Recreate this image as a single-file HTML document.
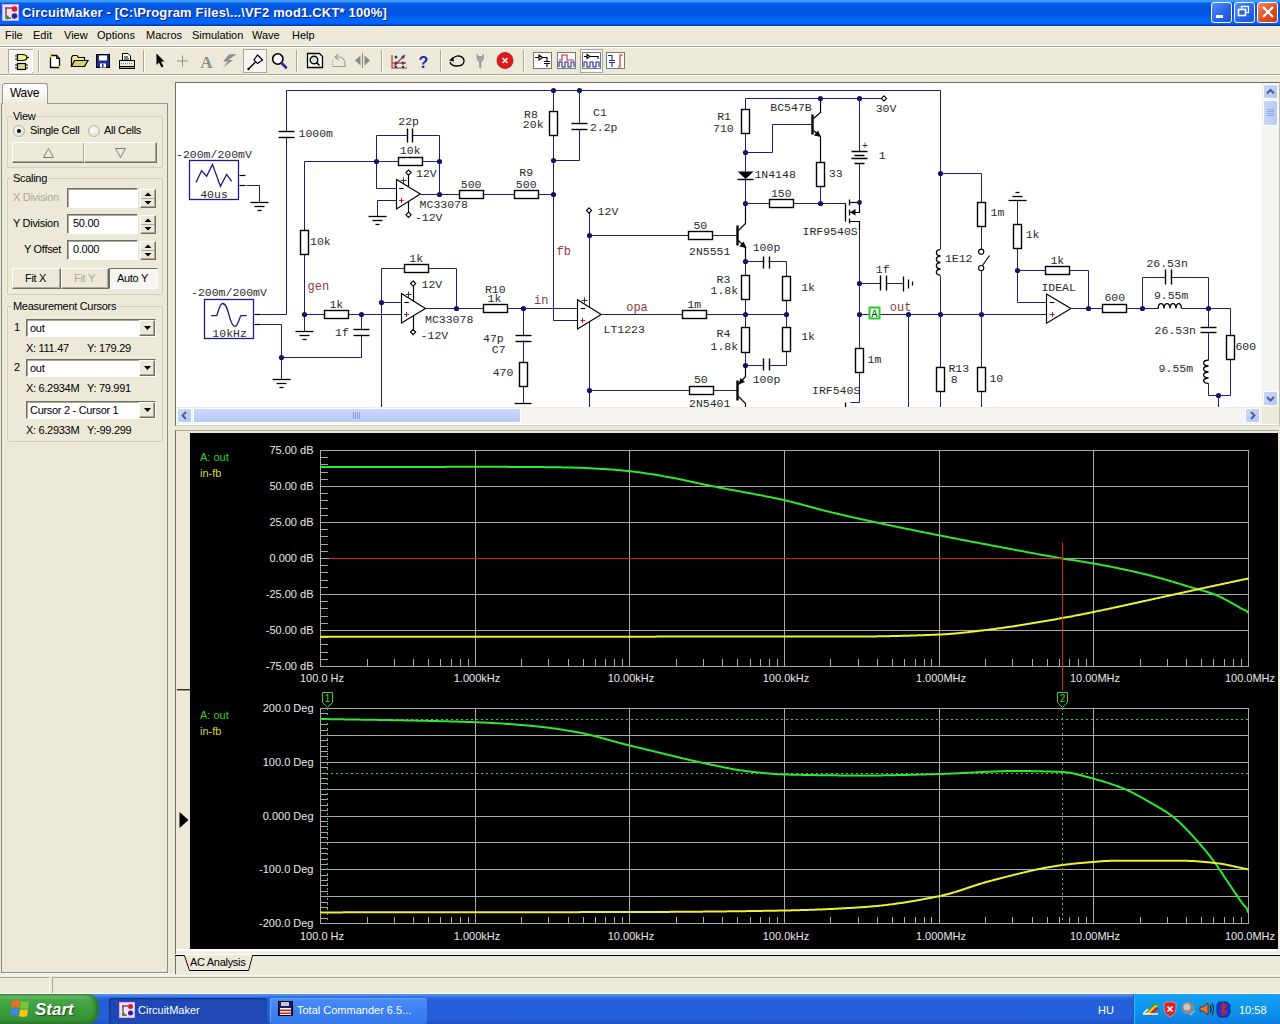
<!DOCTYPE html>
<html><head><meta charset="utf-8">
<style>
*{margin:0;padding:0;box-sizing:border-box}
html,body{width:1280px;height:1024px;overflow:hidden;background:#ECE9D8;font-family:"Liberation Sans",sans-serif;font-size:11px;color:#000}
.a{position:absolute}
#title{left:0;top:0;width:1280px;height:26px;background:linear-gradient(#3C9EFF 0px,#3A9AFF 1.5px,#0A5CE4 3.5px,#0055E1 8px,#0056E4 15px,#0062F2 17px,#0066FF 22px,#0060F8 24px,#0838B4 25px,#0834A8 26px)}
#title .t{left:22px;top:5px;color:#fff;font-weight:bold;font-size:13px;letter-spacing:0.17px;text-shadow:1px 1px 0 #0A1883;white-space:nowrap}
.wb{top:3px;width:21px;height:21px;border:1px solid #fff;border-radius:3px;background:linear-gradient(135deg,#5A8DF8,#2463E8 60%,#1E56D8)}
#menu{left:0;top:26px;width:1280px;height:20px;background:#ECE9D8}
#menu span{position:absolute;top:2px;font-size:11px}
.hl{height:1px;background:#ACA899}
.hw{height:1px;background:#fff}
.sep{width:2px;height:22px;border-left:1px solid #ACA899;border-right:1px solid #fff}
.panel{background:#ECE9D8}
.gb{border:1px solid #D0D0BF;border-radius:2px}
.gbt{background:#ECE9D8;padding:0 1px;font-size:11px}
.btn{background:#ECE9D8;border-top:1px solid #fff;border-left:1px solid #fff;border-right:1px solid #716F64;border-bottom:1px solid #716F64;box-shadow:inset -1px -1px 0 #ACA899}
.edit{background:#fff;border-top:1px solid #716F64;border-left:1px solid #716F64;border-bottom:1px solid #fff;border-right:1px solid #fff;box-shadow:inset 1px 1px 0 #ACA899}
.mono{font-family:"Liberation Mono",monospace}
</style></head><body>

<!-- TITLE BAR -->
<div id="title" class="a">
  <div class="t a">CircuitMaker - [C:\Program Files\...\VF2 mod1.CKT* 100%]</div>
</div>

<!-- MENU -->
<div class="a" style="left:0;top:26px;width:1280px;height:1px;background:#F2F2F6"></div>
<div id="menu" class="a" style="top:27px;height:19px">
  <span style="left:5px">File</span>
  <span style="left:33px">Edit</span>
  <span style="left:64px">View</span>
  <span style="left:97px">Options</span>
  <span style="left:146px">Macros</span>
  <span style="left:192px">Simulation</span>
  <span style="left:252px">Wave</span>
  <span style="left:292px">Help</span>
</div>
<div class="a hw" style="left:0;top:45px;width:1280px"></div>
<div class="a hl" style="left:0;top:46px;width:1280px;background:#A8A498"></div>
<div class="a hw" style="left:0;top:47px;width:1280px"></div>

<!-- TOOLBAR -->
<div id="toolbar" class="a" style="left:0;top:47px;width:1280px;height:28px"></div>
<svg class="a" style="left:0;top:0" width="660" height="80">
<!-- pressed buttons -->
<rect x="8.5" y="49.5" width="24" height="23" fill="#F6F5F1" stroke="#ACA899"/>
<line x1="9" y1="72.5" x2="32" y2="72.5" stroke="#fff"/><line x1="32.5" y1="50" x2="32.5" y2="72" stroke="#fff"/>
<rect x="243.5" y="49.5" width="23" height="23" fill="#F6F5F1" stroke="#ACA899"/>
<rect x="580.5" y="49.5" width="22" height="23" fill="#F6F5F1" stroke="#ACA899"/>
<!-- separators -->
<g stroke="#ACA899"><line x1="38.5" y1="50" x2="38.5" y2="72"/><line x1="143.5" y1="50" x2="143.5" y2="72"/><line x1="296.5" y1="50" x2="296.5" y2="72"/><line x1="381.5" y1="50" x2="381.5" y2="72"/><line x1="440.5" y1="50" x2="440.5" y2="72"/><line x1="523.5" y1="50" x2="523.5" y2="72"/></g>
<g stroke="#fff"><line x1="39.5" y1="50" x2="39.5" y2="72"/><line x1="144.5" y1="50" x2="144.5" y2="72"/><line x1="297.5" y1="50" x2="297.5" y2="72"/><line x1="382.5" y1="50" x2="382.5" y2="72"/><line x1="441.5" y1="50" x2="441.5" y2="72"/><line x1="524.5" y1="50" x2="524.5" y2="72"/></g>
<!-- icon1: gate + chip -->
<path d="M17.5,54.5 H22 Q27,54.5 27,57.5 Q27,60.5 22,60.5 H17.5 Z" fill="#F3F08A" stroke="#000" stroke-width="1.2"/>
<line x1="15" y1="56" x2="17.5" y2="56" stroke="#000"/><line x1="15" y1="59" x2="17.5" y2="59" stroke="#000"/><line x1="27" y1="57.5" x2="29" y2="57.5" stroke="#000"/>
<rect x="17.5" y="63.5" width="8" height="6" fill="#DCDA8E" stroke="#000" stroke-width="1.2"/>
<line x1="15" y1="65" x2="17.5" y2="65" stroke="#000"/><line x1="15" y1="68" x2="17.5" y2="68" stroke="#000"/><line x1="25.5" y1="65" x2="28" y2="65" stroke="#000"/><line x1="25.5" y1="68" x2="28" y2="68" stroke="#000"/>
<!-- new doc -->
<path d="M50.5,55.5 H56.5 L59.5,58.5 V67.5 H50.5 Z" fill="#fff" stroke="#000" stroke-width="1.3"/>
<path d="M56.5,55.5 V58.5 H59.5" fill="none" stroke="#000"/>
<circle cx="50" cy="56" r="1.5" fill="#F0F060"/><circle cx="60" cy="67" r="1.2" fill="#F0F060"/>
<!-- open folder -->
<path d="M71.5,57.5 L73,55.5 H77 L78.5,57.5 H84.5 V66.5 H71.5 Z" fill="#F3E98A" stroke="#000" stroke-width="1.2"/>
<path d="M71.5,66.5 L74.5,60.5 H88 L84.5,66.5 Z" fill="#D9D26C" stroke="#000" stroke-width="1.2"/>
<!-- save -->
<rect x="96.5" y="54.5" width="13" height="13" fill="#1A2C9C" stroke="#000" stroke-width="1"/>
<rect x="99" y="55.5" width="8" height="5" fill="#fff"/>
<rect x="100" y="63.5" width="6" height="4" fill="#fff"/><rect x="102" y="64" width="1.5" height="3" fill="#1A2C9C"/>
<!-- print -->
<path d="M122.5,53.5 H128 L130.5,56 V60.5 H122.5 Z" fill="#fff" stroke="#000"/>
<line x1="124" y1="57" x2="128" y2="57" stroke="#000"/><line x1="124" y1="59" x2="129" y2="59" stroke="#000"/>
<rect x="119.5" y="60.5" width="15" height="6" fill="#E8E8E0" stroke="#000"/>
<line x1="121" y1="63.5" x2="133" y2="63.5" stroke="#888" stroke-dasharray="1,1"/>
<rect x="119.5" y="66.5" width="15" height="2" fill="#A0A0A0" stroke="#000"/>
<!-- arrow -->
<path d="M156.5,53.5 L156.5,65 L159,62.5 L161.5,67.5 L163.5,66.5 L161,61.5 L164.5,61.5 Z" fill="#000"/>
<!-- plus -->
<path d="M182.5,55.5 V66.5 M177,61 H188" stroke="#8E8E8E" stroke-width="1"/>
<!-- A -->
<text x="206.5" y="68" text-anchor="middle" font-family="Liberation Serif" font-weight="bold" font-size="17" fill="#8A8A8A">A</text>
<!-- lightning -->
<path d="M236.5,54 L229,54.5 L223,61.5 L228,61.5 L222.5,68 L233,60 L228.5,60 Z" fill="#8E8E8E"/>
<!-- probe -->
<path d="M257.5,55 L262.5,60 L257.5,63.5 L254,60 Z" fill="#fff" stroke="#000" stroke-width="1.2"/>
<path d="M255.5,62 L249,68.5" stroke="#000" stroke-width="1.3"/><circle cx="248.5" cy="69" r="1.2" fill="#000"/>
<!-- magnifier -->
<circle cx="277.8" cy="59" r="5.2" fill="#fff" stroke="#000" stroke-width="1.6"/>
<path d="M281.5,63 L286,67.5" stroke="#2A2A9A" stroke-width="2.6" stroke-linecap="round"/>
<!-- zoom fit -->
<path d="M307.5,53.5 H319.5 L322.5,56.5 V67.5 H307.5 Z" fill="#fff" stroke="#000" stroke-width="1.3"/>
<circle cx="314" cy="60" r="3.8" fill="#CFE3E8" stroke="#000" stroke-width="1.4"/><path d="M316.5,62.5 L319.5,65.5" stroke="#000" stroke-width="1.6"/>
<!-- rotate gray -->
<path d="M332,66.5 H346 M334.5,57 H339 Q344,57 345,63 V66" fill="none" stroke="#9C9C9C" stroke-width="1.2"/>
<path d="M338.5,54 L335,57 L338.5,60" fill="none" stroke="#9C9C9C" stroke-width="1.3"/>
<path d="M332.5,60 V66" stroke="#9C9C9C" stroke-dasharray="1,1"/>
<!-- flip -->
<path d="M360.5,55.5 L355,60.5 L360.5,65.5 Z M364.5,55.5 L370,60.5 L364.5,65.5 Z" fill="#8A8A8A"/>
<line x1="362.5" y1="53" x2="362.5" y2="68" stroke="#8A8A8A"/>
<!-- net icon -->
<g stroke="#C03020" stroke-width="1.2" fill="none"><path d="M392,55 V68 H407"/><path d="M394,66 L405,55"/><path d="M392,63 H406"/></g>
<g fill="#2A3A8A"><circle cx="396" cy="57" r="1.5"/><circle cx="403" cy="57" r="1.5"/><circle cx="396" cy="63" r="1.5"/><circle cx="403" cy="63" r="1.5"/><circle cx="396" cy="67" r="1.3"/><circle cx="403" cy="67" r="1.3"/></g>
<!-- ? -->
<text x="423.5" y="67.5" text-anchor="middle" font-family="Liberation Sans" font-weight="bold" font-size="16" fill="#1A2AB0">?</text>
<!-- undo -->
<path d="M452.5,58.5 Q456,55.5 459,56 Q464,57 464,61 Q464,66 457,66 Q451,66 450,62" fill="none" stroke="#000" stroke-width="1.3"/>
<path d="M449,60.5 L453,57 L454,61.5 Z" fill="#000"/>
<!-- wrench -->
<path d="M477,54 V58 Q477,61 479.5,61.5 V67.5 Q480,69 481,67.5 V61.5 Q483.5,61 483.5,58 V54 L482,56.5 H478.5 Z" fill="#A6A6A6" stroke="#8A8A8A" stroke-width="0.6"/>
<!-- stop -->
<circle cx="505" cy="60.5" r="8" fill="#E01818" stroke="#A01010" stroke-width="0.8"/>
<path d="M502.5,58 L507.5,63 M507.5,58 L502.5,63" stroke="#fff" stroke-width="1.6"/>
<!-- 4 icons -->
<g stroke="#777" fill="#fff"><rect x="533.5" y="52.5" width="18" height="16"/><rect x="557.5" y="52.5" width="18" height="16"/><rect x="582.5" y="52.5" width="18" height="16"/><rect x="606.5" y="52.5" width="18" height="16"/></g>
<g fill="none" stroke="#000" stroke-width="1.1">
<path d="M535,57.5 H539 M539,55 L542.5,57.5 L539,60 Z M542.5,57.5 H547 V61 M544,61.5 H550 M544,63.5 H550 M547,64 V67"/>
<path d="M559,67 V62 H562 V67 H565 V62 H568 V67 H571 V62 H574 V67" stroke="#1A2A9A"/>
<path d="M559,60 H562 V55 H567 V60 H574" stroke="#D02020"/>
<path d="M584,56.5 H587 M587,54.5 L590,56.5 L587,58.5 Z M590,56.5 H598 V59" />
<path d="M584,67 V62 H587 V67 H590 V62 H593 V67 H596 V62 H599 V67" stroke="#1A2A9A"/>
<path d="M608,55.5 H612 V60 M609,60.5 H615 M609,62.5 H615 M612,63 V67" stroke="#1A2A9A"/>
<path d="M618,67 H620 V55 H623" stroke="#D02020"/>
</g>
</svg>

<div class="a hl" style="left:0;top:74px;width:1280px"></div>
<div class="a hw" style="left:0;top:75px;width:1280px"></div>

<!-- LEFT PANEL -->
<div style="letter-spacing:-0.3px">
<!-- left panel -->
<div class="a" style="left:0;top:81px;width:176px;height:893px;border-bottom:1px solid #fff"></div>
<div class="a" style="left:1px;top:103px;width:167px;height:870px;border:1px solid #8A8A80;border-top-color:#919B9C;background:#ECE9D8"></div>
<!-- Wave tab -->
<div class="a" style="left:2px;top:83px;width:46px;height:21px;border:1px solid #919B9C;border-bottom:none;border-radius:3px 3px 0 0;background:linear-gradient(#FFFFFF,#F6F5F0 60%,#ECE9D8)"></div>
<div class="a" style="left:3px;top:103px;width:44px;height:2px;background:#ECE9D8"></div>
<div class="a" style="left:10px;top:86px;font-size:12px">Wave</div>

<!-- View group -->
<div class="a gb" style="left:7px;top:116px;width:156px;height:52px"></div>
<div class="a gbt" style="left:12px;top:110px;font-size:11px">View</div>
<div class="a" style="left:13px;top:125px;width:12px;height:12px;border-radius:50%;border:1px solid #B4B4A8;background:radial-gradient(circle at 40% 40%,#fff,#D8D8CC)"></div>
<div class="a" style="left:17px;top:129px;width:4px;height:4px;border-radius:50%;background:#000"></div>
<div class="a" style="left:30px;top:124px">Single Cell</div>
<div class="a" style="left:88px;top:125px;width:12px;height:12px;border-radius:50%;border:1px solid #B4B4A8;background:radial-gradient(circle at 40% 40%,#fff,#D8D8CC)"></div>
<div class="a" style="left:104px;top:124px">All Cells</div>
<div class="a btn" style="left:12px;top:142px;width:73px;height:21px"></div>
<div class="a btn" style="left:84px;top:142px;width:73px;height:21px"></div>
<svg class="a" style="left:0;top:0" width="170" height="170"><path d="M43.5,157.5 L48.5,148.5 L53.5,157.5 Z M115.5,148.5 L125.5,148.5 L120.5,157.5 Z" fill="none" stroke="#7F7F7F" stroke-width="1"/></svg>

<!-- Scaling group -->
<div class="a gb" style="left:7px;top:178px;width:156px;height:117px"></div>
<div class="a gbt" style="left:12px;top:172px">Scaling</div>
<div class="a" style="left:13px;top:191px;color:#ACA899">X Division</div>
<div class="a edit" style="left:67px;top:188px;width:71px;height:20px;background:#fff"></div>
<div class="a" style="left:13px;top:217px">Y Division</div>
<div class="a edit" style="left:67px;top:214px;width:71px;height:20px"></div>
<div class="a" style="left:73px;top:217px">50.00</div>
<div class="a" style="left:24px;top:243px">Y Offset</div>
<div class="a edit" style="left:67px;top:240px;width:71px;height:20px"></div>
<div class="a" style="left:73px;top:243px">0.000</div>
<!-- spinners -->
<div class="a btn" style="left:140px;top:189px;width:16px;height:19px"></div>
<div class="a btn" style="left:140px;top:215px;width:16px;height:19px"></div>
<div class="a btn" style="left:140px;top:241px;width:16px;height:19px"></div>
<svg class="a" style="left:0;top:0" width="170" height="300">
<g fill="#000">
<path d="M144.5,196 L151.5,196 L148,192.5 Z M144.5,201 L151.5,201 L148,204.5 Z"/>
<path d="M144.5,222 L151.5,222 L148,218.5 Z M144.5,227 L151.5,227 L148,230.5 Z"/>
<path d="M144.5,248 L151.5,248 L148,244.5 Z M144.5,253 L151.5,253 L148,256.5 Z"/>
</g>
<line x1="141" y1="198.5" x2="155" y2="198.5" stroke="#ACA899"/>
<line x1="141" y1="224.5" x2="155" y2="224.5" stroke="#ACA899"/>
<line x1="141" y1="250.5" x2="155" y2="250.5" stroke="#ACA899"/>
</svg>
<div class="a btn" style="left:12px;top:268px;width:49px;height:21px"></div>
<div class="a" style="left:25px;top:272px">Fit X</div>
<div class="a btn" style="left:61px;top:268px;width:48px;height:21px"></div>
<div class="a" style="left:74px;top:272px;color:#ACA899">Fit Y</div>
<div class="a" style="left:109px;top:268px;width:49px;height:21px;background:#F6F5F0;border-top:1px solid #716F64;border-left:1px solid #716F64;border-right:1px solid #fff;border-bottom:1px solid #fff"></div>
<div class="a" style="left:117px;top:272px">Auto Y</div>

<!-- Measurement cursors -->
<div class="a gb" style="left:7px;top:306px;width:156px;height:136px"></div>
<div class="a gbt" style="left:12px;top:300px">Measurement Cursors</div>
<div class="a" style="left:14px;top:321px">1</div>
<div class="a edit" style="left:26px;top:319px;width:130px;height:18px"></div>
<div class="a" style="left:30px;top:322px">out</div>
<div class="a btn" style="left:139px;top:320px;width:16px;height:16px"></div>
<div class="a" style="left:26px;top:342px">X: 111.47</div><div class="a" style="left:87px;top:342px">Y: 179.29</div>
<div class="a" style="left:14px;top:361px">2</div>
<div class="a edit" style="left:26px;top:359px;width:130px;height:18px"></div>
<div class="a" style="left:30px;top:362px">out</div>
<div class="a btn" style="left:139px;top:360px;width:16px;height:16px"></div>
<div class="a" style="left:26px;top:382px">X: 6.2934M</div><div class="a" style="left:87px;top:382px">Y: 79.991</div>
<div class="a edit" style="left:26px;top:401px;width:130px;height:18px"></div>
<div class="a" style="left:30px;top:404px">Cursor 2 - Cursor 1</div>
<div class="a btn" style="left:139px;top:402px;width:16px;height:16px"></div>
<div class="a" style="left:26px;top:424px">X: 6.2933M</div><div class="a" style="left:87px;top:424px">Y:-99.299</div>
<svg class="a" style="left:0;top:0" width="170" height="450"><g fill="#000">
<path d="M144,326 L151,326 L147.5,330 Z"/>
<path d="M144,366 L151,366 L147.5,370 Z"/>
<path d="M144,408 L151,408 L147.5,412 Z"/>
</g></svg>

</div>

<!-- SCHEMATIC FRAME -->
<div class="a" style="left:175px;top:82px;width:1105px;height:344px;border-top:1px solid #716F64;border-left:1px solid #716F64;border-right:1px solid #C4C0B4;border-bottom:1px solid #D4D0C4;background:#fff"></div>
<div class="a" style="left:176px;top:83px;width:1086px;height:324px;overflow:hidden;background:#fff"><svg class="a" style="left:-176px;top:-83px" width="1280" height="430" viewBox="0 0 1280 430" font-family="Liberation Mono, monospace"><rect x="189.5" y="160.5" width="49" height="39" fill="#fff" stroke="#1E1E82" stroke-width="1.3"/><path d="M196,182.5 L201.6,170.6 L206.6,176.3 L212.5,164.4 L220.4,186.3 L226.6,174.4 L231.6,181.3" fill="none" stroke="#1E1E82" stroke-width="1.3"/><text x="214" y="198" fill="#2A2A2A" text-anchor="middle" font-size="11.5">40us</text><text x="176" y="157.6" fill="#2A2A2A" text-anchor="start" font-size="11.5">-200m/200mV</text><path d="M239.5,175.5 L245.5,175.5" fill="none" stroke="#000" stroke-width="1.2"/><path d="M239.5,185.5 L245.5,185.5" fill="none" stroke="#000" stroke-width="1.2"/><path d="M246.5,185.5 L259.5,185.5 L259.5,202.5" fill="none" stroke="#1E1E82" stroke-width="1"/><path d="M250.5,202.5 L268.5,202.5" fill="none" stroke="#000" stroke-width="1.3"/><path d="M254.5,206.5 L264.5,206.5" fill="none" stroke="#000" stroke-width="1.3"/><path d="M257.5,210.5 L261.5,210.5" fill="none" stroke="#000" stroke-width="1.3"/><rect x="204.5" y="299.5" width="49" height="39" fill="#fff" stroke="#1E1E82" stroke-width="1.3"/><path d="M211,315.6 H216.8 C219,309 220,303.5 222.6,303.5 C226,303.5 227.5,309 229,315 C230.5,321 232,326.3 235,326.3 C238,326.3 239,318 241,315.6 H246.7" fill="none" stroke="#1E1E82" stroke-width="1.3"/><text x="229.6" y="336.8" fill="#2A2A2A" text-anchor="middle" font-size="11.5">10kHz</text><text x="191" y="296.4" fill="#2A2A2A" text-anchor="start" font-size="11.5">-200m/200mV</text><path d="M254.5,314.5 L260.5,314.5" fill="none" stroke="#000" stroke-width="1.2"/><path d="M254.5,324.5 L260.5,324.5" fill="none" stroke="#000" stroke-width="1.2"/><path d="M260.5,314.5 L286.5,314.5 L286.5,90.5 L940.5,90.5 L940.5,407.5" fill="none" stroke="#1E1E82" stroke-width="1"/><rect x="278.5" y="131.7" width="16" height="5.100000000000011" fill="#fff"/><path d="M278.5,131.5 L294.5,131.5" fill="none" stroke="#000" stroke-width="1.4"/><path d="M278.5,137.5 L294.5,137.5" fill="none" stroke="#000" stroke-width="1.4"/><text x="298.5" y="137" fill="#2A2A2A" text-anchor="start" font-size="11.5">1000m</text><path d="M260.5,324.5 L281.5,324.5 L281.5,379.5" fill="none" stroke="#1E1E82" stroke-width="1"/><circle cx="281.5" cy="357.5" r="2.6" fill="#141460"/><path d="M272.5,379.5 L290.5,379.5" fill="none" stroke="#000" stroke-width="1.3"/><path d="M276.5,383.5 L286.5,383.5" fill="none" stroke="#000" stroke-width="1.3"/><path d="M279.5,387.5 L283.5,387.5" fill="none" stroke="#000" stroke-width="1.3"/><path d="M281.5,357.5 L361.5,357.5 L361.5,314.5" fill="none" stroke="#1E1E82" stroke-width="1"/><rect x="353.8" y="330.20000000000005" width="16" height="4.599999999999954" fill="#fff"/><path d="M353.5,329.5 L369.5,329.5" fill="none" stroke="#000" stroke-width="1.4"/><path d="M353.5,335.5 L369.5,335.5" fill="none" stroke="#000" stroke-width="1.4"/><text x="335" y="335.6" fill="#2A2A2A" text-anchor="start" font-size="11.5">1f</text><path d="M304.5,230.5 L304.5,161.5 L376.5,161.5" fill="none" stroke="#1E1E82" stroke-width="1"/><path d="M304.5,254.5 L304.5,331.5" fill="none" stroke="#1E1E82" stroke-width="1"/><rect x="300.5" y="230.5" width="8.0" height="24.0" fill="#fff" stroke="#000" stroke-width="1.4"/><text x="310" y="244.9" fill="#2A2A2A" text-anchor="start" font-size="11.5">10k</text><text x="307.5" y="289.9" fill="#8E3A3A" text-anchor="start" font-size="12">gen</text><circle cx="304.5" cy="314.5" r="2.6" fill="#141460"/><path d="M295.5,331.5 L313.5,331.5" fill="none" stroke="#000" stroke-width="1.3"/><path d="M299.5,335.5 L309.5,335.5" fill="none" stroke="#000" stroke-width="1.3"/><path d="M302.5,339.5 L306.5,339.5" fill="none" stroke="#000" stroke-width="1.3"/><path d="M304.5,314.5 L361.5,314.5 L401.5,314.5" fill="none" stroke="#1E1E82" stroke-width="1"/><rect x="324.5" y="310.5" width="24.0" height="8.0" fill="#fff" stroke="#000" stroke-width="1.4"/><text x="336.3" y="307.8" fill="#2A2A2A" text-anchor="middle" font-size="11.5">1k</text><circle cx="361.5" cy="314.5" r="2.6" fill="#141460"/><path d="M376.5,135.5 L439.5,135.5 L439.5,194.5" fill="none" stroke="#1E1E82" stroke-width="1"/><path d="M376.5,135.5 L376.5,188.5 L396.5,188.5" fill="none" stroke="#1E1E82" stroke-width="1"/><rect x="408.0" y="128.5" width="4.000000000000045" height="14" fill="#fff"/><path d="M407.5,128.5 L407.5,142.5" fill="none" stroke="#000" stroke-width="1.4"/><path d="M412.5,128.5 L412.5,142.5" fill="none" stroke="#000" stroke-width="1.4"/><text x="408.6" y="125" fill="#2A2A2A" text-anchor="middle" font-size="11.5">22p</text><path d="M376.5,161.5 L439.5,161.5" fill="none" stroke="#1E1E82" stroke-width="1"/><rect x="398.5" y="157.5" width="24.0" height="8.0" fill="#fff" stroke="#000" stroke-width="1.4"/><text x="410.2" y="154.3" fill="#2A2A2A" text-anchor="middle" font-size="11.5">10k</text><circle cx="376.5" cy="161.5" r="2.6" fill="#141460"/><circle cx="439.5" cy="161.5" r="2.6" fill="#141460"/><path d="M377.5,200.5 L396.5,200.5" fill="none" stroke="#1E1E82" stroke-width="1"/><path d="M377.5,200.5 L377.5,216.5" fill="none" stroke="#1E1E82" stroke-width="1"/><path d="M368.5,216.5 L386.5,216.5" fill="none" stroke="#000" stroke-width="1.3"/><path d="M372.5,220.5 L382.5,220.5" fill="none" stroke="#000" stroke-width="1.3"/><path d="M375.5,224.5 L379.5,224.5" fill="none" stroke="#000" stroke-width="1.3"/><path d="M408.5,175.5 L408.5,186.5" fill="none" stroke="#000" stroke-width="1.2"/><path d="M408.5,201.5 L408.5,212.5" fill="none" stroke="#000" stroke-width="1.2"/><path d="M408.5,170.0 L411.1,172.6 L408.5,175.2 L405.9,172.6 Z" fill="#fff" stroke="#000" stroke-width="1.1"/><path d="M408.5,212.20000000000002 L411.1,214.8 L408.5,217.4 L405.9,214.8 Z" fill="#fff" stroke="#000" stroke-width="1.1"/><path d="M396.5,179.6 L420.3,194.1 L396.5,208.9 Z" fill="#fff" stroke="#000" stroke-width="1.15"/><text x="416" y="176.6" fill="#2A2A2A" text-anchor="start" font-size="11.5">12V</text><text x="419.6" y="208.2" fill="#2A2A2A" text-anchor="start" font-size="11.5">MC33078</text><text x="414.9" y="221.1" fill="#2A2A2A" text-anchor="start" font-size="11.5">-12V</text><path d="M399.2,188.5 H403.7" stroke="#000" stroke-width="1.1"/><path d="M399.0,200.5 H403.8 M401.5,198.1 V202.9" stroke="#C02020" stroke-width="1.1"/><path d="M400.6,180.5 H406.6 M403.5,177.5 V183.5" stroke="#333" stroke-width="1"/><path d="M420.5,194.5 L459.5,194.5" fill="none" stroke="#1E1E82" stroke-width="1"/><circle cx="439.5" cy="194.5" r="2.6" fill="#141460"/><rect x="459.5" y="190.5" width="24.0" height="8.0" fill="#fff" stroke="#000" stroke-width="1.4"/><text x="471.1" y="187.6" fill="#2A2A2A" text-anchor="middle" font-size="11.5">500</text><path d="M483.5,194.5 L514.5,194.5" fill="none" stroke="#1E1E82" stroke-width="1"/><rect x="514.5" y="190.5" width="24.0" height="8.0" fill="#fff" stroke="#000" stroke-width="1.4"/><text x="526.2" y="175.9" fill="#2A2A2A" text-anchor="middle" font-size="11.5">R9</text><text x="526.2" y="187.6" fill="#2A2A2A" text-anchor="middle" font-size="11.5">500</text><path d="M538.5,194.5 L553.5,194.5" fill="none" stroke="#1E1E82" stroke-width="1"/><path d="M553.5,90.5 L553.5,320.5 L577.5,320.5" fill="none" stroke="#1E1E82" stroke-width="1"/><rect x="549.5" y="111.5" width="8.0" height="24.0" fill="#fff" stroke="#000" stroke-width="1.4"/><text x="530.9" y="117.5" fill="#2A2A2A" text-anchor="middle" font-size="11.5">R8</text><text x="533.2" y="127.8" fill="#2A2A2A" text-anchor="middle" font-size="11.5">20k</text><path d="M579.5,90.5 L579.5,160.5 L553.5,160.5" fill="none" stroke="#1E1E82" stroke-width="1"/><rect x="571.4" y="124.39999999999999" width="16" height="4.900000000000008" fill="#fff"/><path d="M571.5,123.5 L587.5,123.5" fill="none" stroke="#000" stroke-width="1.4"/><path d="M571.5,129.5 L587.5,129.5" fill="none" stroke="#000" stroke-width="1.4"/><text x="600" y="115.6" fill="#2A2A2A" text-anchor="middle" font-size="11.5">C1</text><text x="589.9" y="130.9" fill="#2A2A2A" text-anchor="start" font-size="11.5">2.2p</text><circle cx="553.5" cy="90.5" r="2.6" fill="#141460"/><circle cx="579.5" cy="90.5" r="2.6" fill="#141460"/><circle cx="553.5" cy="160.5" r="2.6" fill="#141460"/><circle cx="553.5" cy="194.5" r="2.6" fill="#141460"/><text x="556.6" y="255.2" fill="#8E3A3A" text-anchor="start" font-size="12">fb</text><path d="M381.5,407.5 L381.5,268.5 L456.5,268.5 L456.5,308.5" fill="none" stroke="#1E1E82" stroke-width="1"/><rect x="404.5" y="264.5" width="24.0" height="8.0" fill="#fff" stroke="#000" stroke-width="1.4"/><text x="416.2" y="261.8" fill="#2A2A2A" text-anchor="middle" font-size="11.5">1k</text><circle cx="381.5" cy="302.5" r="2.6" fill="#141460"/><path d="M381.5,302.5 L401.5,302.5" fill="none" stroke="#1E1E82" stroke-width="1"/><path d="M413.5,286.5 L413.5,301.5" fill="none" stroke="#000" stroke-width="1.2"/><path d="M413.5,315.5 L413.5,329.5" fill="none" stroke="#000" stroke-width="1.2"/><path d="M413.1,281.0 L415.70000000000005,283.6 L413.1,286.20000000000005 L410.5,283.6 Z" fill="#fff" stroke="#000" stroke-width="1.1"/><path d="M413.1,329.4 L415.70000000000005,332 L413.1,334.6 L410.5,332 Z" fill="#fff" stroke="#000" stroke-width="1.1"/><path d="M401.5,293.6 L425.4,308.6 L401.5,323.1 Z" fill="#fff" stroke="#000" stroke-width="1.15"/><text x="421.5" y="287.6" fill="#2A2A2A" text-anchor="start" font-size="11.5">12V</text><text x="425" y="322.8" fill="#2A2A2A" text-anchor="start" font-size="11.5">MC33078</text><text x="420.6" y="338.6" fill="#2A2A2A" text-anchor="start" font-size="11.5">-12V</text><path d="M404.3,302.5 H408.8" stroke="#000" stroke-width="1.1"/><path d="M404.1,314.5 H408.90000000000003 M406.5,312.1 V316.9" stroke="#C02020" stroke-width="1.1"/><path d="M405.7,294.5 H411.7 M408.5,291.5 V297.5" stroke="#333" stroke-width="1"/><path d="M425.5,308.5 L483.5,308.5" fill="none" stroke="#1E1E82" stroke-width="1"/><circle cx="456.5" cy="308.5" r="2.6" fill="#141460"/><rect x="483.5" y="304.5" width="24.0" height="8.0" fill="#fff" stroke="#000" stroke-width="1.4"/><text x="495.3" y="292.9" fill="#2A2A2A" text-anchor="middle" font-size="11.5">R10</text><text x="494.4" y="301.7" fill="#2A2A2A" text-anchor="middle" font-size="11.5">1k</text><path d="M507.5,308.5 L577.5,308.5" fill="none" stroke="#1E1E82" stroke-width="1"/><circle cx="523.5" cy="308.5" r="2.6" fill="#141460"/><text x="534" y="304.3" fill="#8E3A3A" text-anchor="start" font-size="12">in</text><path d="M523.5,308.5 L523.5,403.5" fill="none" stroke="#1E1E82" stroke-width="1"/><rect x="515.4" y="336.0" width="16" height="4.400000000000023" fill="#fff"/><path d="M515.5,335.5 L531.5,335.5" fill="none" stroke="#000" stroke-width="1.4"/><path d="M515.5,341.5 L531.5,341.5" fill="none" stroke="#000" stroke-width="1.4"/><text x="483" y="342" fill="#2A2A2A" text-anchor="start" font-size="11.5">47p</text><text x="491.8" y="352.6" fill="#2A2A2A" text-anchor="start" font-size="11.5">C7</text><rect x="519.5" y="362.5" width="8.0" height="24.0" fill="#fff" stroke="#000" stroke-width="1.4"/><text x="492.7" y="376.4" fill="#2A2A2A" text-anchor="start" font-size="11.5">470</text><path d="M514.5,403.5 L531.5,403.5" fill="none" stroke="#000" stroke-width="1.3"/><path d="M589.5,210.5 L589.5,407.5" fill="none" stroke="#1E1E82" stroke-width="1"/><path d="M577.5,299.8 L601.2,314.5 L577.5,329 Z" fill="#fff" stroke="#000" stroke-width="1.15"/><path d="M580.7,308.5 H585.2" stroke="#000" stroke-width="1.1"/><path d="M580.5,320.5 H585.3000000000001 M582.5,318.1 V322.9" stroke="#C02020" stroke-width="1.1"/><path d="M581.5,300.5 H587.5 M584.5,297.5 V303.5" stroke="#333" stroke-width="1"/><text x="603.5" y="332.5" fill="#2A2A2A" text-anchor="start" font-size="11.5">LT1223</text><path d="M601.5,314.5 L682.5,314.5" fill="none" stroke="#1E1E82" stroke-width="1"/><text x="626.2" y="310.8" fill="#8E3A3A" text-anchor="start" font-size="12">opa</text><rect x="682.5" y="310.5" width="24.0" height="8.0" fill="#fff" stroke="#000" stroke-width="1.4"/><text x="694.2" y="307.7" fill="#2A2A2A" text-anchor="middle" font-size="11.5">1m</text><path d="M706.5,314.5 L786.5,314.5" fill="none" stroke="#1E1E82" stroke-width="1"/><path d="M589,207.9 L591.6,210.5 L589,213.1 L586.4,210.5 Z" fill="#fff" stroke="#000" stroke-width="1.1"/><text x="597.6" y="214.5" fill="#2A2A2A" text-anchor="start" font-size="11.5">12V</text><path d="M589.5,235.5 L688.5,235.5" fill="none" stroke="#1E1E82" stroke-width="1"/><circle cx="589.5" cy="235.5" r="2.6" fill="#141460"/><rect x="688.5" y="231.5" width="24.0" height="8.0" fill="#fff" stroke="#000" stroke-width="1.4"/><text x="700.3" y="228.8" fill="#2A2A2A" text-anchor="middle" font-size="11.5">50</text><path d="M712.5,235.5 L737.5,235.5" fill="none" stroke="#1E1E82" stroke-width="1"/><text x="689" y="255.2" fill="#2A2A2A" text-anchor="start" font-size="11.5">2N5551</text><path d="M589.5,390.5 L689.5,390.5" fill="none" stroke="#1E1E82" stroke-width="1"/><circle cx="589.5" cy="390.5" r="2.6" fill="#141460"/><rect x="689.5" y="386.5" width="24.0" height="8.0" fill="#fff" stroke="#000" stroke-width="1.4"/><text x="700.8" y="383.4" fill="#2A2A2A" text-anchor="middle" font-size="11.5">50</text><path d="M713.5,390.5 L737.5,390.5" fill="none" stroke="#1E1E82" stroke-width="1"/><text x="689" y="406.9" fill="#2A2A2A" text-anchor="start" font-size="11.5">2N5401</text><path d="M737.5,225.5 L737.5,245.5" fill="none" stroke="#000" stroke-width="2.4"/><path d="M738.5,230.5 L745.5,223.5 L745.5,203.5" fill="none" stroke="#000" stroke-width="1.2"/><path d="M738.5,240.5 L745.5,247.5 L745.5,261.5" fill="none" stroke="#000" stroke-width="1.2"/><path d="M746.5,248 L739.5,246.5 L743.5,241.5 Z" fill="#000"/><path d="M737.5,380.5 L737.5,400.5" fill="none" stroke="#000" stroke-width="2.4"/><path d="M738.5,384.5 L745.5,376.5 L745.5,365.5" fill="none" stroke="#000" stroke-width="1.2"/><path d="M738.5,396.5 L745.5,403.5 L745.5,407.5" fill="none" stroke="#000" stroke-width="1.2"/><path d="M738.5,384.5 L740.5,378 L745,382 Z" fill="#000"/><path d="M745.5,109.5 L745.5,98.5 L882.5,98.5" fill="none" stroke="#1E1E82" stroke-width="1"/><path d="M884,95.80000000000001 L886.6,98.4 L884,101.0 L881.4,98.4 Z" fill="#fff" stroke="#000" stroke-width="1.1"/><text x="875.7" y="111.6" fill="#2A2A2A" text-anchor="start" font-size="11.5">30V</text><circle cx="820.5" cy="98.5" r="2.6" fill="#141460"/><circle cx="859.5" cy="98.5" r="2.6" fill="#141460"/><rect x="741.5" y="109.5" width="8.0" height="24.0" fill="#fff" stroke="#000" stroke-width="1.4"/><text x="724.1" y="119.6" fill="#2A2A2A" text-anchor="middle" font-size="11.5">R1</text><text x="723.4" y="131.6" fill="#2A2A2A" text-anchor="middle" font-size="11.5">710</text><path d="M745.5,133.5 L745.5,171.5" fill="none" stroke="#1E1E82" stroke-width="1"/><circle cx="745.5" cy="152.5" r="2.6" fill="#141460"/><path d="M745.5,152.5 L772.5,152.5 L772.5,124.5 L812.5,124.5" fill="none" stroke="#1E1E82" stroke-width="1"/><path d="M737.6,171.4 L753.6,171.4 L745.6,178.9 Z" fill="#000"/><path d="M737.5,179.5 L753.5,179.5" fill="none" stroke="#000" stroke-width="1.4"/><text x="754.4" y="177.7" fill="#2A2A2A" text-anchor="start" font-size="11.5">1N4148</text><path d="M745.5,179.5 L745.5,203.5" fill="none" stroke="#1E1E82" stroke-width="1"/><circle cx="745.5" cy="203.5" r="2.6" fill="#141460"/><path d="M745.5,203.5 L769.5,203.5" fill="none" stroke="#1E1E82" stroke-width="1"/><rect x="769.5" y="199.5" width="24.0" height="8.0" fill="#fff" stroke="#000" stroke-width="1.4"/><text x="781.3" y="197" fill="#2A2A2A" text-anchor="middle" font-size="11.5">150</text><path d="M793.5,203.5 L845.5,203.5 L845.5,221.5" fill="none" stroke="#1E1E82" stroke-width="1"/><circle cx="820.5" cy="203.5" r="2.6" fill="#141460"/><path d="M812.5,114.5 L812.5,134.5" fill="none" stroke="#000" stroke-width="2.4"/><path d="M813.5,118.5 L820.5,112.5 L820.5,98.5" fill="none" stroke="#000" stroke-width="1.2"/><path d="M813.5,130.5 L820.5,136.5 L820.5,162.5" fill="none" stroke="#000" stroke-width="1.2"/><path d="M821,137 L814,135.5 L818,130.5 Z" fill="#000"/><text x="770.3" y="111" fill="#2A2A2A" text-anchor="start" font-size="11.5">BC547B</text><rect x="816.5" y="162.5" width="8.0" height="24.0" fill="#fff" stroke="#000" stroke-width="1.4"/><text x="828.8" y="176.8" fill="#2A2A2A" text-anchor="start" font-size="11.5">33</text><path d="M820.5,186.5 L820.5,203.5" fill="none" stroke="#1E1E82" stroke-width="1"/><path d="M859.5,98.5 L859.5,151.5" fill="none" stroke="#1E1E82" stroke-width="1"/><path d="M859.5,163.5 L859.5,202.5" fill="none" stroke="#1E1E82" stroke-width="1"/><path d="M851.5,151.5 L867.5,151.5" fill="none" stroke="#000" stroke-width="1.5"/><path d="M854.5,155.5 L864.5,155.5" fill="none" stroke="#000" stroke-width="1.5"/><path d="M851.5,158.5 L867.5,158.5" fill="none" stroke="#000" stroke-width="1.5"/><path d="M854.5,163.5 L864.5,163.5" fill="none" stroke="#000" stroke-width="1.5"/><text x="862" y="149" fill="#2A2A2A" text-anchor="start" font-size="10">+</text><text x="882.3" y="158.5" fill="#2A2A2A" text-anchor="middle" font-size="11.5">1</text><path d="M845.5,203.5 L845.5,221.5" fill="none" stroke="#000" stroke-width="1.3"/><path d="M849.5,199.5 L849.5,205.5" fill="none" stroke="#000" stroke-width="1.3"/><path d="M849.5,209.5 L849.5,215.5" fill="none" stroke="#000" stroke-width="1.3"/><path d="M849.5,218.5 L849.5,223.5" fill="none" stroke="#000" stroke-width="1.3"/><path d="M849.5,202.5 L859.5,202.5" fill="none" stroke="#000" stroke-width="1.2"/><path d="M849.5,212.5 L859.5,212.5 L859.5,202.5" fill="none" stroke="#000" stroke-width="1.2"/><path d="M849.5,221.5 L859.5,221.5 L859.5,230.5" fill="none" stroke="#000" stroke-width="1.2"/><path d="M850,212.3 L855.5,209 L855.5,215.6 Z" fill="#000"/><circle cx="859.5" cy="202.5" r="2.4" fill="#141460"/><text x="802.5" y="234.7" fill="#2A2A2A" text-anchor="start" font-size="11.5">IRF9540S</text><path d="M859.5,230.5 L859.5,348.5" fill="none" stroke="#1E1E82" stroke-width="1"/><path d="M745.5,261.5 L745.5,275.5" fill="none" stroke="#1E1E82" stroke-width="1"/><circle cx="745.5" cy="261.5" r="2.6" fill="#141460"/><path d="M745.5,261.5 L786.5,261.5 L786.5,276.5" fill="none" stroke="#1E1E82" stroke-width="1"/><rect x="764.3000000000001" y="256.2" width="4.199999999999977" height="12" fill="#fff"/><path d="M763.5,256.5 L763.5,268.5" fill="none" stroke="#000" stroke-width="1.4"/><path d="M769.5,256.5 L769.5,268.5" fill="none" stroke="#000" stroke-width="1.4"/><text x="752.7" y="251" fill="#2A2A2A" text-anchor="start" font-size="11.5">100p</text><rect x="741.5" y="275.5" width="8.0" height="24.0" fill="#fff" stroke="#000" stroke-width="1.4"/><text x="723.4" y="282.7" fill="#2A2A2A" text-anchor="middle" font-size="11.5">R3</text><text x="710.5" y="293.9" fill="#2A2A2A" text-anchor="start" font-size="11.5">1.8k</text><rect x="782.5" y="276.5" width="8.0" height="24.0" fill="#fff" stroke="#000" stroke-width="1.4"/><text x="801.2" y="290.9" fill="#2A2A2A" text-anchor="start" font-size="11.5">1k</text><path d="M745.5,299.5 L745.5,327.5" fill="none" stroke="#1E1E82" stroke-width="1"/><path d="M786.5,300.5 L786.5,327.5" fill="none" stroke="#1E1E82" stroke-width="1"/><circle cx="745.5" cy="314.5" r="2.6" fill="#141460"/><circle cx="786.5" cy="314.5" r="2.6" fill="#141460"/><rect x="741.5" y="327.5" width="8.0" height="25.0" fill="#fff" stroke="#000" stroke-width="1.4"/><text x="723.4" y="336.6" fill="#2A2A2A" text-anchor="middle" font-size="11.5">R4</text><text x="710.5" y="349.5" fill="#2A2A2A" text-anchor="start" font-size="11.5">1.8k</text><rect x="782.5" y="327.5" width="8.0" height="24.0" fill="#fff" stroke="#000" stroke-width="1.4"/><text x="801.2" y="340.1" fill="#2A2A2A" text-anchor="start" font-size="11.5">1k</text><path d="M745.5,352.5 L745.5,365.5 L786.5,365.5 L786.5,351.5" fill="none" stroke="#1E1E82" stroke-width="1"/><circle cx="745.5" cy="365.5" r="2.6" fill="#141460"/><rect x="764.3000000000001" y="358.7" width="4.199999999999977" height="12" fill="#fff"/><path d="M763.5,358.5 L763.5,370.5" fill="none" stroke="#000" stroke-width="1.4"/><path d="M769.5,358.5 L769.5,370.5" fill="none" stroke="#000" stroke-width="1.4"/><text x="752.7" y="382.7" fill="#2A2A2A" text-anchor="start" font-size="11.5">100p</text><path d="M859.5,283.5 L880.5,283.5" fill="none" stroke="#1E1E82" stroke-width="1"/><path d="M886.5,283.5 L903.5,283.5" fill="none" stroke="#1E1E82" stroke-width="1"/><circle cx="859.5" cy="283.5" r="2.6" fill="#141460"/><rect x="881.1" y="275.5" width="4.599999999999954" height="15.0" fill="#fff"/><path d="M880.5,275.5 L880.5,290.5" fill="none" stroke="#000" stroke-width="1.4"/><path d="M886.5,275.5 L886.5,290.5" fill="none" stroke="#000" stroke-width="1.4"/><path d="M903.5,276.5 L903.5,291.5" fill="none" stroke="#000" stroke-width="1.3"/><path d="M908.5,279.5 L908.5,288.5" fill="none" stroke="#000" stroke-width="1.3"/><path d="M912.5,281.5 L912.5,285.5" fill="none" stroke="#000" stroke-width="1.3"/><text x="875.8" y="272.6" fill="#2A2A2A" text-anchor="start" font-size="11.5">1f</text><path d="M859.5,314.5 L1046.5,314.5" fill="none" stroke="#1E1E82" stroke-width="1"/><circle cx="859.5" cy="314.5" r="2.6" fill="#141460"/><rect x="869.5" y="307.5" width="10" height="11" fill="#E8FFE8" stroke="#2ACB2A" stroke-width="2"/><text x="874.5" y="316.5" fill="#222" text-anchor="middle" font-size="10">A</text><text x="889.8" y="310.8" fill="#8E3A3A" text-anchor="start" font-size="12">out</text><circle cx="908.5" cy="314.5" r="2.6" fill="#141460"/><circle cx="940.5" cy="314.5" r="2.6" fill="#141460"/><circle cx="981.5" cy="314.5" r="2.6" fill="#141460"/><path d="M908.5,314.5 L908.5,407.5" fill="none" stroke="#1E1E82" stroke-width="1"/><rect x="855.5" y="348.5" width="8.0" height="24.0" fill="#fff" stroke="#000" stroke-width="1.4"/><text x="867.6" y="363.1" fill="#2A2A2A" text-anchor="start" font-size="11.5">1m</text><path d="M859.5,372.5 L859.5,402.5 L850.5,402.5" fill="none" stroke="#1E1E82" stroke-width="1"/><path d="M845.5,402.5 L845.5,408.5" fill="none" stroke="#000" stroke-width="1.3"/><text x="812" y="394" fill="#2A2A2A" text-anchor="start" font-size="11.5">IRF540S</text><rect x="935" y="249" width="11" height="27" fill="#fff"/><path d="M940.5,249.4 C935,250 935,255.6 940.5,256 C935,256.6 935,262 940.5,262.5 C935,263 935,268.6 940.5,269 C935,269.6 935,275 940.5,275.2" fill="none" stroke="#000" stroke-width="1.3"/><text x="944.9" y="262.3" fill="#2A2A2A" text-anchor="start" font-size="11.5">1E12</text><rect x="936.5" y="367.5" width="8.0" height="24.0" fill="#fff" stroke="#000" stroke-width="1.4"/><text x="948.4" y="372.4" fill="#2A2A2A" text-anchor="start" font-size="11.5">R13</text><text x="954.3" y="383.4" fill="#2A2A2A" text-anchor="middle" font-size="11.5">8</text><path d="M940.5,173.5 L981.5,173.5 L981.5,202.5" fill="none" stroke="#1E1E82" stroke-width="1"/><circle cx="940.5" cy="173.5" r="2.6" fill="#141460"/><rect x="977.5" y="202.5" width="8.0" height="24.0" fill="#fff" stroke="#000" stroke-width="1.4"/><text x="990.6" y="216.4" fill="#2A2A2A" text-anchor="start" font-size="11.5">1m</text><path d="M981.5,226.5 L981.5,249.5" fill="none" stroke="#1E1E82" stroke-width="1"/><path d="M981.5,270.5 L981.5,407.5" fill="none" stroke="#1E1E82" stroke-width="1"/><circle cx="981.2" cy="251.7" r="2.6" fill="#fff" stroke="#000" stroke-width="1.1"/><circle cx="981.2" cy="268.1" r="2.6" fill="#fff" stroke="#000" stroke-width="1.1"/><path d="M982.5,265.5 L989.5,255.5" fill="none" stroke="#000" stroke-width="1.2"/><rect x="977.5" y="367.5" width="8.0" height="24.0" fill="#fff" stroke="#000" stroke-width="1.4"/><text x="989.4" y="381.9" fill="#2A2A2A" text-anchor="start" font-size="11.5">10</text><path d="M1008.5,200.5 L1026.5,200.5" fill="none" stroke="#000" stroke-width="1.3"/><path d="M1012.5,196.5 L1022.5,196.5" fill="none" stroke="#000" stroke-width="1.3"/><path d="M1015.5,192.5 L1019.5,192.5" fill="none" stroke="#000" stroke-width="1.3"/><path d="M1017.5,200.5 L1017.5,224.5" fill="none" stroke="#1E1E82" stroke-width="1"/><rect x="1013.5" y="224.5" width="8.0" height="24.0" fill="#fff" stroke="#000" stroke-width="1.4"/><text x="1025.7" y="238.2" fill="#2A2A2A" text-anchor="start" font-size="11.5">1k</text><path d="M1017.5,248.5 L1017.5,302.5 L1046.5,302.5" fill="none" stroke="#1E1E82" stroke-width="1"/><circle cx="1017.5" cy="270.5" r="2.6" fill="#141460"/><path d="M1017.5,270.5 L1088.5,270.5 L1088.5,308.5" fill="none" stroke="#1E1E82" stroke-width="1"/><rect x="1045.5" y="266.5" width="24.0" height="8.0" fill="#fff" stroke="#000" stroke-width="1.4"/><text x="1057.3" y="263.9" fill="#2A2A2A" text-anchor="middle" font-size="11.5">1k</text><path d="M1046.5,293.9 L1070.9,308.4 L1046.5,323.2 Z" fill="#fff" stroke="#000" stroke-width="1.15"/><text x="1041.4" y="290.9" fill="#2A2A2A" text-anchor="start" font-size="11.5">IDEAL</text><path d="M1049.8,302.5 H1054.3" stroke="#000" stroke-width="1.1"/><path d="M1049.6,314.5 H1054.3999999999999 M1052.5,312.1 V316.9" stroke="#C02020" stroke-width="1.1"/><path d="M1070.5,308.5 L1102.5,308.5" fill="none" stroke="#1E1E82" stroke-width="1"/><circle cx="1088.5" cy="308.5" r="2.6" fill="#141460"/><rect x="1102.5" y="304.5" width="24.0" height="8.0" fill="#fff" stroke="#000" stroke-width="1.4"/><text x="1114.8" y="301.4" fill="#2A2A2A" text-anchor="middle" font-size="11.5">600</text><path d="M1126.5,308.5 L1158.5,308.5" fill="none" stroke="#1E1E82" stroke-width="1"/><circle cx="1142.5" cy="308.5" r="2.6" fill="#141460"/><path d="M1142.5,308.5 L1142.5,277.5 L1208.5,277.5 L1208.5,308.5" fill="none" stroke="#1E1E82" stroke-width="1"/><rect x="1165.6999999999998" y="269.5" width="4.700000000000091" height="15.0" fill="#fff"/><path d="M1165.5,269.5 L1165.5,284.5" fill="none" stroke="#000" stroke-width="1.4"/><path d="M1171.5,269.5 L1171.5,284.5" fill="none" stroke="#000" stroke-width="1.4"/><text x="1146.4" y="266.7" fill="#2A2A2A" text-anchor="start" font-size="11.5">26.53n</text><path d="M1158.1,308.4 C1158.5,302 1163.5,302 1164,308.4 C1164.5,302 1169.5,302 1170,308.4 C1170.5,302 1175.5,302 1176,308.4 C1176.5,302 1181,302 1181.5,308.4" fill="none" stroke="#000" stroke-width="1.3"/><text x="1153.9" y="299.1" fill="#2A2A2A" text-anchor="start" font-size="11.5">9.55m</text><path d="M1181.5,308.5 L1230.5,308.5 L1230.5,335.5" fill="none" stroke="#1E1E82" stroke-width="1"/><circle cx="1208.5" cy="308.5" r="2.6" fill="#141460"/><rect x="1226.5" y="335.5" width="8.0" height="24.0" fill="#fff" stroke="#000" stroke-width="1.4"/><text x="1235.4" y="349.5" fill="#2A2A2A" text-anchor="start" font-size="11.5">600</text><path d="M1230.5,359.5 L1230.5,395.5 L1208.5,395.5" fill="none" stroke="#1E1E82" stroke-width="1"/><circle cx="1218.5" cy="395.5" r="2.6" fill="#141460"/><path d="M1218.5,395.5 L1218.5,407.5" fill="none" stroke="#1E1E82" stroke-width="1"/><path d="M1208.5,308.5 L1208.5,327.5" fill="none" stroke="#1E1E82" stroke-width="1"/><path d="M1208.5,332.5 L1208.5,360.5" fill="none" stroke="#1E1E82" stroke-width="1"/><path d="M1208.5,383.5 L1208.5,395.5" fill="none" stroke="#1E1E82" stroke-width="1"/><rect x="1200.5" y="327.8" width="16" height="4.200000000000034" fill="#fff"/><path d="M1200.5,327.5 L1216.5,327.5" fill="none" stroke="#000" stroke-width="1.4"/><path d="M1200.5,332.5 L1216.5,332.5" fill="none" stroke="#000" stroke-width="1.4"/><text x="1154.6" y="333.5" fill="#2A2A2A" text-anchor="start" font-size="11.5">26.53n</text><path d="M1208.5,360 C1202,360.5 1202,365.5 1208.5,366 C1202,366.5 1202,371.5 1208.5,372 C1202,372.5 1202,377.5 1208.5,378 C1202,378.5 1202,383 1208.5,383.4" fill="none" stroke="#000" stroke-width="1.3"/><text x="1158.6" y="372.4" fill="#2A2A2A" text-anchor="start" font-size="11.5">9.55m</text></svg></div>
<!-- vertical scrollbar -->
<div class="a" style="left:1262px;top:83px;width:17px;height:324px;background:#F4F3EE;border-left:1px solid #EEEDE5"></div>
<div class="a" style="left:1263px;top:84px;width:15px;height:15px;border:1px solid #fff;border-radius:2px;background:linear-gradient(135deg,#C8D8FC,#B2C8F8)"></div>
<div class="a" style="left:1263px;top:100px;width:15px;height:26px;border:1px solid #fff;border-radius:2px;background:linear-gradient(90deg,#C6D6FC,#BACCF6)"></div>
<div class="a" style="left:1263px;top:391px;width:15px;height:15px;border:1px solid #fff;border-radius:2px;background:linear-gradient(135deg,#C8D8FC,#B2C8F8)"></div>
<!-- horizontal scrollbar -->
<div class="a" style="left:176px;top:407px;width:1086px;height:17px;background:#F4F3EE;border-top:1px solid #EEEDE5"></div>
<div class="a" style="left:177px;top:408px;width:15px;height:15px;border:1px solid #fff;border-radius:2px;background:linear-gradient(135deg,#C8D8FC,#B2C8F8)"></div>
<div class="a" style="left:193px;top:408px;width:328px;height:15px;border:1px solid #fff;border-radius:2px;background:linear-gradient(#C9D8FC,#B7CAF5)"></div>
<div class="a" style="left:1245px;top:408px;width:15px;height:15px;border:1px solid #fff;border-radius:2px;background:linear-gradient(135deg,#C8D8FC,#B2C8F8)"></div>
<div class="a" style="left:1262px;top:407px;width:17px;height:17px;background:#ECE9D8"></div>
<svg class="a" style="left:0;top:0" width="1280" height="430">
<g fill="none" stroke="#4D6185" stroke-width="2">
<path d="M1267,93.5 L1270.5,90 L1274,93.5"/>
<path d="M1267,397 L1270.5,400.5 L1274,397"/>
<path d="M186,412 L182.5,415.5 L186,419"/>
<path d="M1251,412 L1254.5,415.5 L1251,419"/>
</g>
<g stroke="#8DA3D8" stroke-width="1"><path d="M1267,109.5 H1274 M1267,111.5 H1274 M1267,113.5 H1274 M1267,115.5 H1274"/>
<path d="M353.5,412 V419 M355.5,412 V419 M357.5,412 V419 M359.5,412 V419"/></g>
</svg>


<!-- WAVE FRAME -->
<div class="a" style="left:175px;top:430px;width:1104px;height:544px;border-top:1px solid #A8A498;border-left:1px solid #716F64;"></div>
<div class="a" style="left:190px;top:433px;width:1088px;height:516px;background:#000;overflow:hidden"><div class="a" style="left:-190px;top:-433px;width:1280px;height:1024px"><svg class="a" style="left:0;top:0" width="1280" height="1024" viewBox="0 0 1280 1024" font-family="Liberation Sans, sans-serif"><line x1="320.0" y1="450.5" x2="1249.0" y2="450.5" stroke="#A8A8A8" stroke-width="1" /><text x="313.5" y="454.0" fill="#E8E8E8" text-anchor="end" font-size="11">75.00 dB</text><line x1="320.0" y1="486.5" x2="1249.0" y2="486.5" stroke="#A8A8A8" stroke-width="1" /><text x="313.5" y="490.0" fill="#E8E8E8" text-anchor="end" font-size="11">50.00 dB</text><line x1="320.0" y1="522.5" x2="1249.0" y2="522.5" stroke="#A8A8A8" stroke-width="1" /><text x="313.5" y="526.0" fill="#E8E8E8" text-anchor="end" font-size="11">25.00 dB</text><line x1="320.0" y1="558.5" x2="1249.0" y2="558.5" stroke="#A8A8A8" stroke-width="1" /><text x="313.5" y="562.0" fill="#E8E8E8" text-anchor="end" font-size="11">0.000 dB</text><line x1="320.0" y1="594.5" x2="1249.0" y2="594.5" stroke="#A8A8A8" stroke-width="1" /><text x="313.5" y="598.0" fill="#E8E8E8" text-anchor="end" font-size="11">-25.00 dB</text><line x1="320.0" y1="630.5" x2="1249.0" y2="630.5" stroke="#A8A8A8" stroke-width="1" /><text x="313.5" y="634.0" fill="#E8E8E8" text-anchor="end" font-size="11">-50.00 dB</text><line x1="320.0" y1="666.5" x2="1249.0" y2="666.5" stroke="#A8A8A8" stroke-width="1" /><text x="313.5" y="670.0" fill="#E8E8E8" text-anchor="end" font-size="11">-75.00 dB</text><line x1="320.5" y1="450.0" x2="320.5" y2="667.0" stroke="#A8A8A8" stroke-width="1" /><line x1="475.5" y1="450.0" x2="475.5" y2="667.0" stroke="#A8A8A8" stroke-width="1" /><line x1="629.5" y1="450.0" x2="629.5" y2="667.0" stroke="#A8A8A8" stroke-width="1" /><line x1="784.5" y1="450.0" x2="784.5" y2="667.0" stroke="#A8A8A8" stroke-width="1" /><line x1="939.5" y1="450.0" x2="939.5" y2="667.0" stroke="#A8A8A8" stroke-width="1" /><line x1="1093.5" y1="450.0" x2="1093.5" y2="667.0" stroke="#A8A8A8" stroke-width="1" /><line x1="1248.5" y1="450.0" x2="1248.5" y2="667.0" stroke="#A8A8A8" stroke-width="1" /><line x1="320.0" y1="450.5" x2="328.0" y2="450.5" stroke="#A8A8A8" stroke-width="1" /><line x1="320.0" y1="457.5" x2="328.0" y2="457.5" stroke="#A8A8A8" stroke-width="1" /><line x1="320.0" y1="464.5" x2="328.0" y2="464.5" stroke="#A8A8A8" stroke-width="1" /><line x1="320.0" y1="472.5" x2="328.0" y2="472.5" stroke="#A8A8A8" stroke-width="1" /><line x1="320.0" y1="479.5" x2="328.0" y2="479.5" stroke="#A8A8A8" stroke-width="1" /><line x1="320.0" y1="486.5" x2="328.0" y2="486.5" stroke="#A8A8A8" stroke-width="1" /><line x1="320.0" y1="493.5" x2="328.0" y2="493.5" stroke="#A8A8A8" stroke-width="1" /><line x1="320.0" y1="500.5" x2="328.0" y2="500.5" stroke="#A8A8A8" stroke-width="1" /><line x1="320.0" y1="508.5" x2="328.0" y2="508.5" stroke="#A8A8A8" stroke-width="1" /><line x1="320.0" y1="515.5" x2="328.0" y2="515.5" stroke="#A8A8A8" stroke-width="1" /><line x1="320.0" y1="522.5" x2="328.0" y2="522.5" stroke="#A8A8A8" stroke-width="1" /><line x1="320.0" y1="529.5" x2="328.0" y2="529.5" stroke="#A8A8A8" stroke-width="1" /><line x1="320.0" y1="536.5" x2="328.0" y2="536.5" stroke="#A8A8A8" stroke-width="1" /><line x1="320.0" y1="544.5" x2="328.0" y2="544.5" stroke="#A8A8A8" stroke-width="1" /><line x1="320.0" y1="551.5" x2="328.0" y2="551.5" stroke="#A8A8A8" stroke-width="1" /><line x1="320.0" y1="558.5" x2="328.0" y2="558.5" stroke="#A8A8A8" stroke-width="1" /><line x1="320.0" y1="565.5" x2="328.0" y2="565.5" stroke="#A8A8A8" stroke-width="1" /><line x1="320.0" y1="572.5" x2="328.0" y2="572.5" stroke="#A8A8A8" stroke-width="1" /><line x1="320.0" y1="580.5" x2="328.0" y2="580.5" stroke="#A8A8A8" stroke-width="1" /><line x1="320.0" y1="587.5" x2="328.0" y2="587.5" stroke="#A8A8A8" stroke-width="1" /><line x1="320.0" y1="594.5" x2="328.0" y2="594.5" stroke="#A8A8A8" stroke-width="1" /><line x1="320.0" y1="601.5" x2="328.0" y2="601.5" stroke="#A8A8A8" stroke-width="1" /><line x1="320.0" y1="608.5" x2="328.0" y2="608.5" stroke="#A8A8A8" stroke-width="1" /><line x1="320.0" y1="616.5" x2="328.0" y2="616.5" stroke="#A8A8A8" stroke-width="1" /><line x1="320.0" y1="623.5" x2="328.0" y2="623.5" stroke="#A8A8A8" stroke-width="1" /><line x1="320.0" y1="630.5" x2="328.0" y2="630.5" stroke="#A8A8A8" stroke-width="1" /><line x1="320.0" y1="637.5" x2="328.0" y2="637.5" stroke="#A8A8A8" stroke-width="1" /><line x1="320.0" y1="644.5" x2="328.0" y2="644.5" stroke="#A8A8A8" stroke-width="1" /><line x1="320.0" y1="652.5" x2="328.0" y2="652.5" stroke="#A8A8A8" stroke-width="1" /><line x1="320.0" y1="659.5" x2="328.0" y2="659.5" stroke="#A8A8A8" stroke-width="1" /><line x1="320.0" y1="666.5" x2="328.0" y2="666.5" stroke="#A8A8A8" stroke-width="1" /><line x1="367.5" y1="659.0" x2="367.5" y2="666.0" stroke="#A8A8A8" stroke-width="1" /><line x1="394.5" y1="659.0" x2="394.5" y2="666.0" stroke="#A8A8A8" stroke-width="1" /><line x1="413.5" y1="659.0" x2="413.5" y2="666.0" stroke="#A8A8A8" stroke-width="1" /><line x1="428.5" y1="659.0" x2="428.5" y2="666.0" stroke="#A8A8A8" stroke-width="1" /><line x1="440.5" y1="659.0" x2="440.5" y2="666.0" stroke="#A8A8A8" stroke-width="1" /><line x1="451.5" y1="659.0" x2="451.5" y2="666.0" stroke="#A8A8A8" stroke-width="1" /><line x1="460.5" y1="659.0" x2="460.5" y2="666.0" stroke="#A8A8A8" stroke-width="1" /><line x1="468.5" y1="659.0" x2="468.5" y2="666.0" stroke="#A8A8A8" stroke-width="1" /><line x1="521.5" y1="659.0" x2="521.5" y2="666.0" stroke="#A8A8A8" stroke-width="1" /><line x1="548.5" y1="659.0" x2="548.5" y2="666.0" stroke="#A8A8A8" stroke-width="1" /><line x1="568.5" y1="659.0" x2="568.5" y2="666.0" stroke="#A8A8A8" stroke-width="1" /><line x1="583.5" y1="659.0" x2="583.5" y2="666.0" stroke="#A8A8A8" stroke-width="1" /><line x1="595.5" y1="659.0" x2="595.5" y2="666.0" stroke="#A8A8A8" stroke-width="1" /><line x1="605.5" y1="659.0" x2="605.5" y2="666.0" stroke="#A8A8A8" stroke-width="1" /><line x1="614.5" y1="659.0" x2="614.5" y2="666.0" stroke="#A8A8A8" stroke-width="1" /><line x1="622.5" y1="659.0" x2="622.5" y2="666.0" stroke="#A8A8A8" stroke-width="1" /><line x1="676.5" y1="659.0" x2="676.5" y2="666.0" stroke="#A8A8A8" stroke-width="1" /><line x1="703.5" y1="659.0" x2="703.5" y2="666.0" stroke="#A8A8A8" stroke-width="1" /><line x1="722.5" y1="659.0" x2="722.5" y2="666.0" stroke="#A8A8A8" stroke-width="1" /><line x1="737.5" y1="659.0" x2="737.5" y2="666.0" stroke="#A8A8A8" stroke-width="1" /><line x1="750.5" y1="659.0" x2="750.5" y2="666.0" stroke="#A8A8A8" stroke-width="1" /><line x1="760.5" y1="659.0" x2="760.5" y2="666.0" stroke="#A8A8A8" stroke-width="1" /><line x1="769.5" y1="659.0" x2="769.5" y2="666.0" stroke="#A8A8A8" stroke-width="1" /><line x1="777.5" y1="659.0" x2="777.5" y2="666.0" stroke="#A8A8A8" stroke-width="1" /><line x1="830.5" y1="659.0" x2="830.5" y2="666.0" stroke="#A8A8A8" stroke-width="1" /><line x1="858.5" y1="659.0" x2="858.5" y2="666.0" stroke="#A8A8A8" stroke-width="1" /><line x1="877.5" y1="659.0" x2="877.5" y2="666.0" stroke="#A8A8A8" stroke-width="1" /><line x1="892.5" y1="659.0" x2="892.5" y2="666.0" stroke="#A8A8A8" stroke-width="1" /><line x1="904.5" y1="659.0" x2="904.5" y2="666.0" stroke="#A8A8A8" stroke-width="1" /><line x1="915.5" y1="659.0" x2="915.5" y2="666.0" stroke="#A8A8A8" stroke-width="1" /><line x1="924.5" y1="659.0" x2="924.5" y2="666.0" stroke="#A8A8A8" stroke-width="1" /><line x1="931.5" y1="659.0" x2="931.5" y2="666.0" stroke="#A8A8A8" stroke-width="1" /><line x1="985.5" y1="659.0" x2="985.5" y2="666.0" stroke="#A8A8A8" stroke-width="1" /><line x1="1012.5" y1="659.0" x2="1012.5" y2="666.0" stroke="#A8A8A8" stroke-width="1" /><line x1="1032.5" y1="659.0" x2="1032.5" y2="666.0" stroke="#A8A8A8" stroke-width="1" /><line x1="1047.5" y1="659.0" x2="1047.5" y2="666.0" stroke="#A8A8A8" stroke-width="1" /><line x1="1059.5" y1="659.0" x2="1059.5" y2="666.0" stroke="#A8A8A8" stroke-width="1" /><line x1="1069.5" y1="659.0" x2="1069.5" y2="666.0" stroke="#A8A8A8" stroke-width="1" /><line x1="1078.5" y1="659.0" x2="1078.5" y2="666.0" stroke="#A8A8A8" stroke-width="1" /><line x1="1086.5" y1="659.0" x2="1086.5" y2="666.0" stroke="#A8A8A8" stroke-width="1" /><line x1="1140.5" y1="659.0" x2="1140.5" y2="666.0" stroke="#A8A8A8" stroke-width="1" /><line x1="1167.5" y1="659.0" x2="1167.5" y2="666.0" stroke="#A8A8A8" stroke-width="1" /><line x1="1186.5" y1="659.0" x2="1186.5" y2="666.0" stroke="#A8A8A8" stroke-width="1" /><line x1="1201.5" y1="659.0" x2="1201.5" y2="666.0" stroke="#A8A8A8" stroke-width="1" /><line x1="1213.5" y1="659.0" x2="1213.5" y2="666.0" stroke="#A8A8A8" stroke-width="1" /><line x1="1224.5" y1="659.0" x2="1224.5" y2="666.0" stroke="#A8A8A8" stroke-width="1" /><line x1="1233.5" y1="659.0" x2="1233.5" y2="666.0" stroke="#A8A8A8" stroke-width="1" /><line x1="1241.5" y1="659.0" x2="1241.5" y2="666.0" stroke="#A8A8A8" stroke-width="1" /><text x="322.0" y="681.5" fill="#E8E8E8" text-anchor="middle" font-size="11">100.0 Hz</text><text x="477.0" y="681.5" fill="#E8E8E8" text-anchor="middle" font-size="11">1.000kHz</text><text x="631.0" y="681.5" fill="#E8E8E8" text-anchor="middle" font-size="11">10.00kHz</text><text x="786.0" y="681.5" fill="#E8E8E8" text-anchor="middle" font-size="11">100.0kHz</text><text x="941.0" y="681.5" fill="#E8E8E8" text-anchor="middle" font-size="11">1.000MHz</text><text x="1095.0" y="681.5" fill="#E8E8E8" text-anchor="middle" font-size="11">10.00MHz</text><text x="1250.0" y="681.5" fill="#E8E8E8" text-anchor="middle" font-size="11">100.0MHz</text><line x1="320.0" y1="708.5" x2="1249.0" y2="708.5" stroke="#A8A8A8" stroke-width="1" /><text x="313.5" y="712.0" fill="#E8E8E8" text-anchor="end" font-size="11">200.0 Deg</text><line x1="320.0" y1="735.5" x2="1249.0" y2="735.5" stroke="#A8A8A8" stroke-width="1" /><line x1="320.0" y1="762.5" x2="1249.0" y2="762.5" stroke="#A8A8A8" stroke-width="1" /><text x="313.5" y="766.0" fill="#E8E8E8" text-anchor="end" font-size="11">100.0 Deg</text><line x1="320.0" y1="789.5" x2="1249.0" y2="789.5" stroke="#A8A8A8" stroke-width="1" /><line x1="320.0" y1="816.5" x2="1249.0" y2="816.5" stroke="#A8A8A8" stroke-width="1" /><text x="313.5" y="820.0" fill="#E8E8E8" text-anchor="end" font-size="11">0.000 Deg</text><line x1="320.0" y1="842.5" x2="1249.0" y2="842.5" stroke="#A8A8A8" stroke-width="1" /><line x1="320.0" y1="869.5" x2="1249.0" y2="869.5" stroke="#A8A8A8" stroke-width="1" /><text x="313.5" y="873.0" fill="#E8E8E8" text-anchor="end" font-size="11">-100.0 Deg</text><line x1="320.0" y1="896.5" x2="1249.0" y2="896.5" stroke="#A8A8A8" stroke-width="1" /><line x1="320.0" y1="923.5" x2="1249.0" y2="923.5" stroke="#A8A8A8" stroke-width="1" /><text x="313.5" y="927.0" fill="#E8E8E8" text-anchor="end" font-size="11">-200.0 Deg</text><line x1="320.5" y1="708.0" x2="320.5" y2="924.0" stroke="#A8A8A8" stroke-width="1" /><line x1="475.5" y1="708.0" x2="475.5" y2="924.0" stroke="#A8A8A8" stroke-width="1" /><line x1="629.5" y1="708.0" x2="629.5" y2="924.0" stroke="#A8A8A8" stroke-width="1" /><line x1="784.5" y1="708.0" x2="784.5" y2="924.0" stroke="#A8A8A8" stroke-width="1" /><line x1="939.5" y1="708.0" x2="939.5" y2="924.0" stroke="#A8A8A8" stroke-width="1" /><line x1="1093.5" y1="708.0" x2="1093.5" y2="924.0" stroke="#A8A8A8" stroke-width="1" /><line x1="1248.5" y1="708.0" x2="1248.5" y2="924.0" stroke="#A8A8A8" stroke-width="1" /><line x1="320.0" y1="708.5" x2="328.0" y2="708.5" stroke="#A8A8A8" stroke-width="1" /><line x1="320.0" y1="713.5" x2="328.0" y2="713.5" stroke="#A8A8A8" stroke-width="1" /><line x1="320.0" y1="719.5" x2="328.0" y2="719.5" stroke="#A8A8A8" stroke-width="1" /><line x1="320.0" y1="724.5" x2="328.0" y2="724.5" stroke="#A8A8A8" stroke-width="1" /><line x1="320.0" y1="730.5" x2="328.0" y2="730.5" stroke="#A8A8A8" stroke-width="1" /><line x1="320.0" y1="735.5" x2="328.0" y2="735.5" stroke="#A8A8A8" stroke-width="1" /><line x1="320.0" y1="740.5" x2="328.0" y2="740.5" stroke="#A8A8A8" stroke-width="1" /><line x1="320.0" y1="746.5" x2="328.0" y2="746.5" stroke="#A8A8A8" stroke-width="1" /><line x1="320.0" y1="751.5" x2="328.0" y2="751.5" stroke="#A8A8A8" stroke-width="1" /><line x1="320.0" y1="756.5" x2="328.0" y2="756.5" stroke="#A8A8A8" stroke-width="1" /><line x1="320.0" y1="762.5" x2="328.0" y2="762.5" stroke="#A8A8A8" stroke-width="1" /><line x1="320.0" y1="767.5" x2="328.0" y2="767.5" stroke="#A8A8A8" stroke-width="1" /><line x1="320.0" y1="773.5" x2="328.0" y2="773.5" stroke="#A8A8A8" stroke-width="1" /><line x1="320.0" y1="778.5" x2="328.0" y2="778.5" stroke="#A8A8A8" stroke-width="1" /><line x1="320.0" y1="783.5" x2="328.0" y2="783.5" stroke="#A8A8A8" stroke-width="1" /><line x1="320.0" y1="789.5" x2="328.0" y2="789.5" stroke="#A8A8A8" stroke-width="1" /><line x1="320.0" y1="794.5" x2="328.0" y2="794.5" stroke="#A8A8A8" stroke-width="1" /><line x1="320.0" y1="799.5" x2="328.0" y2="799.5" stroke="#A8A8A8" stroke-width="1" /><line x1="320.0" y1="805.5" x2="328.0" y2="805.5" stroke="#A8A8A8" stroke-width="1" /><line x1="320.0" y1="810.5" x2="328.0" y2="810.5" stroke="#A8A8A8" stroke-width="1" /><line x1="320.0" y1="816.5" x2="328.0" y2="816.5" stroke="#A8A8A8" stroke-width="1" /><line x1="320.0" y1="821.5" x2="328.0" y2="821.5" stroke="#A8A8A8" stroke-width="1" /><line x1="320.0" y1="826.5" x2="328.0" y2="826.5" stroke="#A8A8A8" stroke-width="1" /><line x1="320.0" y1="832.5" x2="328.0" y2="832.5" stroke="#A8A8A8" stroke-width="1" /><line x1="320.0" y1="837.5" x2="328.0" y2="837.5" stroke="#A8A8A8" stroke-width="1" /><line x1="320.0" y1="842.5" x2="328.0" y2="842.5" stroke="#A8A8A8" stroke-width="1" /><line x1="320.0" y1="848.5" x2="328.0" y2="848.5" stroke="#A8A8A8" stroke-width="1" /><line x1="320.0" y1="853.5" x2="328.0" y2="853.5" stroke="#A8A8A8" stroke-width="1" /><line x1="320.0" y1="859.5" x2="328.0" y2="859.5" stroke="#A8A8A8" stroke-width="1" /><line x1="320.0" y1="864.5" x2="328.0" y2="864.5" stroke="#A8A8A8" stroke-width="1" /><line x1="320.0" y1="869.5" x2="328.0" y2="869.5" stroke="#A8A8A8" stroke-width="1" /><line x1="320.0" y1="875.5" x2="328.0" y2="875.5" stroke="#A8A8A8" stroke-width="1" /><line x1="320.0" y1="880.5" x2="328.0" y2="880.5" stroke="#A8A8A8" stroke-width="1" /><line x1="320.0" y1="885.5" x2="328.0" y2="885.5" stroke="#A8A8A8" stroke-width="1" /><line x1="320.0" y1="891.5" x2="328.0" y2="891.5" stroke="#A8A8A8" stroke-width="1" /><line x1="320.0" y1="896.5" x2="328.0" y2="896.5" stroke="#A8A8A8" stroke-width="1" /><line x1="320.0" y1="902.5" x2="328.0" y2="902.5" stroke="#A8A8A8" stroke-width="1" /><line x1="320.0" y1="907.5" x2="328.0" y2="907.5" stroke="#A8A8A8" stroke-width="1" /><line x1="320.0" y1="912.5" x2="328.0" y2="912.5" stroke="#A8A8A8" stroke-width="1" /><line x1="320.0" y1="918.5" x2="328.0" y2="918.5" stroke="#A8A8A8" stroke-width="1" /><line x1="320.0" y1="923.5" x2="328.0" y2="923.5" stroke="#A8A8A8" stroke-width="1" /><line x1="367.5" y1="917.0" x2="367.5" y2="923.0" stroke="#A8A8A8" stroke-width="1" /><line x1="394.5" y1="917.0" x2="394.5" y2="923.0" stroke="#A8A8A8" stroke-width="1" /><line x1="413.5" y1="917.0" x2="413.5" y2="923.0" stroke="#A8A8A8" stroke-width="1" /><line x1="428.5" y1="917.0" x2="428.5" y2="923.0" stroke="#A8A8A8" stroke-width="1" /><line x1="440.5" y1="917.0" x2="440.5" y2="923.0" stroke="#A8A8A8" stroke-width="1" /><line x1="451.5" y1="917.0" x2="451.5" y2="923.0" stroke="#A8A8A8" stroke-width="1" /><line x1="460.5" y1="917.0" x2="460.5" y2="923.0" stroke="#A8A8A8" stroke-width="1" /><line x1="468.5" y1="917.0" x2="468.5" y2="923.0" stroke="#A8A8A8" stroke-width="1" /><line x1="521.5" y1="917.0" x2="521.5" y2="923.0" stroke="#A8A8A8" stroke-width="1" /><line x1="548.5" y1="917.0" x2="548.5" y2="923.0" stroke="#A8A8A8" stroke-width="1" /><line x1="568.5" y1="917.0" x2="568.5" y2="923.0" stroke="#A8A8A8" stroke-width="1" /><line x1="583.5" y1="917.0" x2="583.5" y2="923.0" stroke="#A8A8A8" stroke-width="1" /><line x1="595.5" y1="917.0" x2="595.5" y2="923.0" stroke="#A8A8A8" stroke-width="1" /><line x1="605.5" y1="917.0" x2="605.5" y2="923.0" stroke="#A8A8A8" stroke-width="1" /><line x1="614.5" y1="917.0" x2="614.5" y2="923.0" stroke="#A8A8A8" stroke-width="1" /><line x1="622.5" y1="917.0" x2="622.5" y2="923.0" stroke="#A8A8A8" stroke-width="1" /><line x1="676.5" y1="917.0" x2="676.5" y2="923.0" stroke="#A8A8A8" stroke-width="1" /><line x1="703.5" y1="917.0" x2="703.5" y2="923.0" stroke="#A8A8A8" stroke-width="1" /><line x1="722.5" y1="917.0" x2="722.5" y2="923.0" stroke="#A8A8A8" stroke-width="1" /><line x1="737.5" y1="917.0" x2="737.5" y2="923.0" stroke="#A8A8A8" stroke-width="1" /><line x1="750.5" y1="917.0" x2="750.5" y2="923.0" stroke="#A8A8A8" stroke-width="1" /><line x1="760.5" y1="917.0" x2="760.5" y2="923.0" stroke="#A8A8A8" stroke-width="1" /><line x1="769.5" y1="917.0" x2="769.5" y2="923.0" stroke="#A8A8A8" stroke-width="1" /><line x1="777.5" y1="917.0" x2="777.5" y2="923.0" stroke="#A8A8A8" stroke-width="1" /><line x1="830.5" y1="917.0" x2="830.5" y2="923.0" stroke="#A8A8A8" stroke-width="1" /><line x1="858.5" y1="917.0" x2="858.5" y2="923.0" stroke="#A8A8A8" stroke-width="1" /><line x1="877.5" y1="917.0" x2="877.5" y2="923.0" stroke="#A8A8A8" stroke-width="1" /><line x1="892.5" y1="917.0" x2="892.5" y2="923.0" stroke="#A8A8A8" stroke-width="1" /><line x1="904.5" y1="917.0" x2="904.5" y2="923.0" stroke="#A8A8A8" stroke-width="1" /><line x1="915.5" y1="917.0" x2="915.5" y2="923.0" stroke="#A8A8A8" stroke-width="1" /><line x1="924.5" y1="917.0" x2="924.5" y2="923.0" stroke="#A8A8A8" stroke-width="1" /><line x1="931.5" y1="917.0" x2="931.5" y2="923.0" stroke="#A8A8A8" stroke-width="1" /><line x1="985.5" y1="917.0" x2="985.5" y2="923.0" stroke="#A8A8A8" stroke-width="1" /><line x1="1012.5" y1="917.0" x2="1012.5" y2="923.0" stroke="#A8A8A8" stroke-width="1" /><line x1="1032.5" y1="917.0" x2="1032.5" y2="923.0" stroke="#A8A8A8" stroke-width="1" /><line x1="1047.5" y1="917.0" x2="1047.5" y2="923.0" stroke="#A8A8A8" stroke-width="1" /><line x1="1059.5" y1="917.0" x2="1059.5" y2="923.0" stroke="#A8A8A8" stroke-width="1" /><line x1="1069.5" y1="917.0" x2="1069.5" y2="923.0" stroke="#A8A8A8" stroke-width="1" /><line x1="1078.5" y1="917.0" x2="1078.5" y2="923.0" stroke="#A8A8A8" stroke-width="1" /><line x1="1086.5" y1="917.0" x2="1086.5" y2="923.0" stroke="#A8A8A8" stroke-width="1" /><line x1="1140.5" y1="917.0" x2="1140.5" y2="923.0" stroke="#A8A8A8" stroke-width="1" /><line x1="1167.5" y1="917.0" x2="1167.5" y2="923.0" stroke="#A8A8A8" stroke-width="1" /><line x1="1186.5" y1="917.0" x2="1186.5" y2="923.0" stroke="#A8A8A8" stroke-width="1" /><line x1="1201.5" y1="917.0" x2="1201.5" y2="923.0" stroke="#A8A8A8" stroke-width="1" /><line x1="1213.5" y1="917.0" x2="1213.5" y2="923.0" stroke="#A8A8A8" stroke-width="1" /><line x1="1224.5" y1="917.0" x2="1224.5" y2="923.0" stroke="#A8A8A8" stroke-width="1" /><line x1="1233.5" y1="917.0" x2="1233.5" y2="923.0" stroke="#A8A8A8" stroke-width="1" /><line x1="1241.5" y1="917.0" x2="1241.5" y2="923.0" stroke="#A8A8A8" stroke-width="1" /><text x="322.0" y="940.0" fill="#E8E8E8" text-anchor="middle" font-size="11">100.0 Hz</text><text x="477.0" y="940.0" fill="#E8E8E8" text-anchor="middle" font-size="11">1.000kHz</text><text x="631.0" y="940.0" fill="#E8E8E8" text-anchor="middle" font-size="11">10.00kHz</text><text x="786.0" y="940.0" fill="#E8E8E8" text-anchor="middle" font-size="11">100.0kHz</text><text x="941.0" y="940.0" fill="#E8E8E8" text-anchor="middle" font-size="11">1.000MHz</text><text x="1095.0" y="940.0" fill="#E8E8E8" text-anchor="middle" font-size="11">10.00MHz</text><text x="1250.0" y="940.0" fill="#E8E8E8" text-anchor="middle" font-size="11">100.0MHz</text><path d="M321.0,467.00 L322.5,467.00 L324.0,467.00 L325.5,467.00 L327.0,467.00 L328.5,467.00 L330.0,467.00 L331.5,467.00 L333.0,467.00 L334.5,467.00 L336.0,467.00 L337.5,467.00 L339.0,467.00 L340.5,467.00 L342.0,467.00 L343.5,467.00 L345.0,467.00 L346.5,467.00 L348.0,467.00 L349.5,467.00 L351.0,467.00 L352.5,467.00 L354.0,467.00 L355.5,467.00 L357.0,467.00 L358.5,467.00 L360.0,467.00 L361.5,467.00 L363.0,467.00 L364.5,467.00 L366.0,467.00 L367.5,467.00 L369.0,467.00 L370.5,467.00 L372.0,467.00 L373.5,467.00 L375.0,467.00 L376.5,467.00 L378.0,467.00 L379.5,467.00 L381.0,467.00 L382.5,467.00 L384.0,467.00 L385.5,467.00 L387.0,467.00 L388.5,467.00 L390.0,467.00 L391.5,467.00 L393.0,467.00 L394.5,467.00 L396.0,467.00 L397.5,467.00 L399.0,467.00 L400.5,467.00 L402.0,467.00 L403.5,467.00 L405.0,467.00 L406.5,467.00 L408.0,466.99 L409.5,466.99 L411.0,466.99 L412.5,466.99 L414.0,466.98 L415.5,466.98 L417.0,466.98 L418.5,466.97 L420.0,466.97 L421.5,466.96 L423.0,466.96 L424.5,466.95 L426.0,466.95 L427.5,466.95 L429.0,466.94 L430.5,466.93 L432.0,466.93 L433.5,466.92 L435.0,466.92 L436.5,466.91 L438.0,466.91 L439.5,466.90 L441.0,466.90 L442.5,466.89 L444.0,466.89 L445.5,466.88 L447.0,466.87 L448.5,466.87 L450.0,466.86 L451.5,466.86 L453.0,466.85 L454.5,466.85 L456.0,466.84 L457.5,466.84 L459.0,466.83 L460.5,466.83 L462.0,466.83 L463.5,466.82 L465.0,466.82 L466.5,466.82 L468.0,466.81 L469.5,466.81 L471.0,466.81 L472.5,466.81 L474.0,466.80 L475.5,466.80 L477.0,466.80 L478.5,466.80 L480.0,466.80 L481.5,466.80 L483.0,466.80 L484.5,466.80 L486.0,466.81 L487.5,466.81 L489.0,466.81 L490.5,466.81 L492.0,466.82 L493.5,466.82 L495.0,466.83 L496.5,466.83 L498.0,466.84 L499.5,466.84 L501.0,466.85 L502.5,466.85 L504.0,466.86 L505.5,466.87 L507.0,466.87 L508.5,466.88 L510.0,466.89 L511.5,466.90 L513.0,466.91 L514.5,466.91 L516.0,466.92 L517.5,466.93 L519.0,466.94 L520.5,466.95 L522.0,466.96 L523.5,466.97 L525.0,466.98 L526.5,466.99 L528.0,467.00 L529.5,467.01 L531.0,467.02 L532.5,467.03 L534.0,467.04 L535.5,467.05 L537.0,467.06 L538.5,467.08 L540.0,467.09 L541.5,467.10 L543.0,467.12 L544.5,467.13 L546.0,467.15 L547.5,467.17 L549.0,467.19 L550.5,467.21 L552.0,467.23 L553.5,467.25 L555.0,467.27 L556.5,467.29 L558.0,467.31 L559.5,467.33 L561.0,467.36 L562.5,467.38 L564.0,467.41 L565.5,467.44 L567.0,467.47 L568.5,467.49 L570.0,467.52 L571.5,467.56 L573.0,467.59 L574.5,467.63 L576.0,467.67 L577.5,467.71 L579.0,467.76 L580.5,467.81 L582.0,467.87 L583.5,467.93 L585.0,468.00 L586.5,468.07 L588.0,468.14 L589.5,468.22 L591.0,468.30 L592.5,468.38 L594.0,468.46 L595.5,468.54 L597.0,468.63 L598.5,468.72 L600.0,468.80 L601.5,468.90 L603.0,468.99 L604.5,469.08 L606.0,469.18 L607.5,469.29 L609.0,469.39 L610.5,469.50 L612.0,469.62 L613.5,469.73 L615.0,469.85 L616.5,469.98 L618.0,470.11 L619.5,470.24 L621.0,470.37 L622.5,470.51 L624.0,470.65 L625.5,470.79 L627.0,470.94 L628.5,471.10 L630.0,471.26 L631.5,471.42 L633.0,471.59 L634.5,471.77 L636.0,471.95 L637.5,472.14 L639.0,472.34 L640.5,472.54 L642.0,472.75 L643.5,472.97 L645.0,473.19 L646.5,473.41 L648.0,473.64 L649.5,473.88 L651.0,474.12 L652.5,474.36 L654.0,474.60 L655.5,474.85 L657.0,475.10 L658.5,475.35 L660.0,475.61 L661.5,475.86 L663.0,476.12 L664.5,476.38 L666.0,476.64 L667.5,476.91 L669.0,477.18 L670.5,477.45 L672.0,477.73 L673.5,478.01 L675.0,478.30 L676.5,478.59 L678.0,478.89 L679.5,479.20 L681.0,479.51 L682.5,479.82 L684.0,480.14 L685.5,480.45 L687.0,480.78 L688.5,481.10 L690.0,481.42 L691.5,481.75 L693.0,482.08 L694.5,482.41 L696.0,482.74 L697.5,483.06 L699.0,483.39 L700.5,483.72 L702.0,484.04 L703.5,484.36 L705.0,484.69 L706.5,485.00 L708.0,485.32 L709.5,485.63 L711.0,485.94 L712.5,486.24 L714.0,486.54 L715.5,486.84 L717.0,487.14 L718.5,487.43 L720.0,487.72 L721.5,488.01 L723.0,488.30 L724.5,488.58 L726.0,488.86 L727.5,489.15 L729.0,489.43 L730.5,489.71 L732.0,489.98 L733.5,490.26 L735.0,490.54 L736.5,490.81 L738.0,491.09 L739.5,491.36 L741.0,491.64 L742.5,491.92 L744.0,492.19 L745.5,492.47 L747.0,492.74 L748.5,493.02 L750.0,493.30 L751.5,493.57 L753.0,493.85 L754.5,494.13 L756.0,494.42 L757.5,494.70 L759.0,494.98 L760.5,495.27 L762.0,495.56 L763.5,495.85 L765.0,496.14 L766.5,496.44 L768.0,496.74 L769.5,497.04 L771.0,497.34 L772.5,497.65 L774.0,497.96 L775.5,498.27 L777.0,498.58 L778.5,498.90 L780.0,499.23 L781.5,499.56 L783.0,499.89 L784.5,500.23 L786.0,500.57 L787.5,500.92 L789.0,501.28 L790.5,501.64 L792.0,502.01 L793.5,502.39 L795.0,502.77 L796.5,503.16 L798.0,503.55 L799.5,503.94 L801.0,504.34 L802.5,504.74 L804.0,505.14 L805.5,505.55 L807.0,505.95 L808.5,506.36 L810.0,506.77 L811.5,507.17 L813.0,507.58 L814.5,507.98 L816.0,508.39 L817.5,508.79 L819.0,509.19 L820.5,509.58 L822.0,509.98 L823.5,510.36 L825.0,510.75 L826.5,511.13 L828.0,511.50 L829.5,511.87 L831.0,512.23 L832.5,512.60 L834.0,512.95 L835.5,513.31 L837.0,513.66 L838.5,514.02 L840.0,514.37 L841.5,514.72 L843.0,515.06 L844.5,515.41 L846.0,515.75 L847.5,516.09 L849.0,516.44 L850.5,516.78 L852.0,517.11 L853.5,517.45 L855.0,517.79 L856.5,518.12 L858.0,518.45 L859.5,518.79 L861.0,519.12 L862.5,519.45 L864.0,519.78 L865.5,520.11 L867.0,520.43 L868.5,520.76 L870.0,521.09 L871.5,521.41 L873.0,521.74 L874.5,522.06 L876.0,522.38 L877.5,522.70 L879.0,523.03 L880.5,523.35 L882.0,523.67 L883.5,523.98 L885.0,524.30 L886.5,524.62 L888.0,524.93 L889.5,525.25 L891.0,525.56 L892.5,525.88 L894.0,526.19 L895.5,526.50 L897.0,526.81 L898.5,527.12 L900.0,527.43 L901.5,527.74 L903.0,528.05 L904.5,528.36 L906.0,528.67 L907.5,528.97 L909.0,529.28 L910.5,529.59 L912.0,529.89 L913.5,530.20 L915.0,530.50 L916.5,530.80 L918.0,531.11 L919.5,531.41 L921.0,531.71 L922.5,532.01 L924.0,532.31 L925.5,532.61 L927.0,532.91 L928.5,533.21 L930.0,533.51 L931.5,533.81 L933.0,534.11 L934.5,534.41 L936.0,534.71 L937.5,535.00 L939.0,535.30 L940.5,535.60 L942.0,535.89 L943.5,536.19 L945.0,536.49 L946.5,536.78 L948.0,537.07 L949.5,537.37 L951.0,537.66 L952.5,537.95 L954.0,538.25 L955.5,538.54 L957.0,538.83 L958.5,539.12 L960.0,539.41 L961.5,539.70 L963.0,539.98 L964.5,540.27 L966.0,540.56 L967.5,540.85 L969.0,541.14 L970.5,541.42 L972.0,541.71 L973.5,541.99 L975.0,542.28 L976.5,542.57 L978.0,542.85 L979.5,543.13 L981.0,543.42 L982.5,543.70 L984.0,543.99 L985.5,544.27 L987.0,544.55 L988.5,544.84 L990.0,545.12 L991.5,545.40 L993.0,545.68 L994.5,545.97 L996.0,546.25 L997.5,546.53 L999.0,546.81 L1000.5,547.09 L1002.0,547.38 L1003.5,547.66 L1005.0,547.94 L1006.5,548.22 L1008.0,548.51 L1009.5,548.79 L1011.0,549.07 L1012.5,549.36 L1014.0,549.64 L1015.5,549.92 L1017.0,550.21 L1018.5,550.49 L1020.0,550.77 L1021.5,551.06 L1023.0,551.34 L1024.5,551.62 L1026.0,551.90 L1027.5,552.18 L1029.0,552.46 L1030.5,552.74 L1032.0,553.02 L1033.5,553.30 L1035.0,553.58 L1036.5,553.86 L1038.0,554.13 L1039.5,554.41 L1041.0,554.68 L1042.5,554.96 L1044.0,555.23 L1045.5,555.50 L1047.0,555.77 L1048.5,556.04 L1050.0,556.31 L1051.5,556.58 L1053.0,556.84 L1054.5,557.11 L1056.0,557.37 L1057.5,557.63 L1059.0,557.89 L1060.5,558.15 L1062.0,558.41 L1063.5,558.66 L1065.0,558.91 L1066.5,559.16 L1068.0,559.40 L1069.5,559.64 L1071.0,559.88 L1072.5,560.11 L1074.0,560.35 L1075.5,560.58 L1077.0,560.81 L1078.5,561.05 L1080.0,561.28 L1081.5,561.52 L1083.0,561.75 L1084.5,561.99 L1086.0,562.24 L1087.5,562.48 L1089.0,562.73 L1090.5,562.99 L1092.0,563.25 L1093.5,563.51 L1095.0,563.78 L1096.5,564.05 L1098.0,564.32 L1099.5,564.60 L1101.0,564.88 L1102.5,565.16 L1104.0,565.44 L1105.5,565.73 L1107.0,566.01 L1108.5,566.31 L1110.0,566.60 L1111.5,566.89 L1113.0,567.19 L1114.5,567.49 L1116.0,567.80 L1117.5,568.10 L1119.0,568.41 L1120.5,568.72 L1122.0,569.04 L1123.5,569.35 L1125.0,569.67 L1126.5,569.99 L1128.0,570.32 L1129.5,570.64 L1131.0,570.97 L1132.5,571.30 L1134.0,571.64 L1135.5,571.98 L1137.0,572.32 L1138.5,572.66 L1140.0,573.01 L1141.5,573.36 L1143.0,573.72 L1144.5,574.08 L1146.0,574.45 L1147.5,574.83 L1149.0,575.21 L1150.5,575.59 L1152.0,575.98 L1153.5,576.38 L1155.0,576.77 L1156.5,577.17 L1158.0,577.58 L1159.5,577.99 L1161.0,578.40 L1162.5,578.81 L1164.0,579.23 L1165.5,579.65 L1167.0,580.08 L1168.5,580.51 L1170.0,580.94 L1171.5,581.38 L1173.0,581.83 L1174.5,582.28 L1176.0,582.73 L1177.5,583.19 L1179.0,583.64 L1180.5,584.10 L1182.0,584.56 L1183.5,585.02 L1185.0,585.48 L1186.5,585.93 L1188.0,586.39 L1189.5,586.84 L1191.0,587.28 L1192.5,587.71 L1194.0,588.14 L1195.5,588.56 L1197.0,588.98 L1198.5,589.39 L1200.0,589.81 L1201.5,590.23 L1203.0,590.65 L1204.5,591.08 L1206.0,591.52 L1207.5,591.98 L1209.0,592.45 L1210.5,592.95 L1212.0,593.46 L1213.5,594.01 L1215.0,594.59 L1216.5,595.20 L1218.0,595.85 L1219.5,596.54 L1221.0,597.26 L1222.5,598.01 L1224.0,598.79 L1225.5,599.58 L1227.0,600.38 L1228.5,601.20 L1230.0,602.02 L1231.5,602.85 L1233.0,603.69 L1234.5,604.54 L1236.0,605.40 L1237.5,606.28 L1239.0,607.16 L1240.5,608.03 L1242.0,608.87 L1243.5,609.64 L1245.0,610.31 L1246.5,610.85 L1248.0,612.50" fill="none" stroke="#2EE82E" stroke-width="2" stroke-linejoin="round" stroke-linecap="round"/><path d="M321.0,636.80 L322.5,636.80 L324.0,636.80 L325.5,636.80 L327.0,636.80 L328.5,636.80 L330.0,636.80 L331.5,636.79 L333.0,636.79 L334.5,636.79 L336.0,636.79 L337.5,636.79 L339.0,636.79 L340.5,636.79 L342.0,636.79 L343.5,636.79 L345.0,636.79 L346.5,636.79 L348.0,636.79 L349.5,636.79 L351.0,636.78 L352.5,636.78 L354.0,636.78 L355.5,636.78 L357.0,636.78 L358.5,636.78 L360.0,636.78 L361.5,636.78 L363.0,636.78 L364.5,636.78 L366.0,636.78 L367.5,636.78 L369.0,636.77 L370.5,636.77 L372.0,636.77 L373.5,636.77 L375.0,636.77 L376.5,636.77 L378.0,636.77 L379.5,636.77 L381.0,636.77 L382.5,636.77 L384.0,636.77 L385.5,636.77 L387.0,636.77 L388.5,636.76 L390.0,636.76 L391.5,636.76 L393.0,636.76 L394.5,636.76 L396.0,636.76 L397.5,636.76 L399.0,636.76 L400.5,636.76 L402.0,636.76 L403.5,636.76 L405.0,636.76 L406.5,636.76 L408.0,636.75 L409.5,636.75 L411.0,636.75 L412.5,636.75 L414.0,636.75 L415.5,636.75 L417.0,636.75 L418.5,636.75 L420.0,636.75 L421.5,636.75 L423.0,636.75 L424.5,636.75 L426.0,636.75 L427.5,636.74 L429.0,636.74 L430.5,636.74 L432.0,636.74 L433.5,636.74 L435.0,636.74 L436.5,636.74 L438.0,636.74 L439.5,636.74 L441.0,636.74 L442.5,636.74 L444.0,636.74 L445.5,636.74 L447.0,636.73 L448.5,636.73 L450.0,636.73 L451.5,636.73 L453.0,636.73 L454.5,636.73 L456.0,636.73 L457.5,636.73 L459.0,636.73 L460.5,636.73 L462.0,636.73 L463.5,636.73 L465.0,636.73 L466.5,636.72 L468.0,636.72 L469.5,636.72 L471.0,636.72 L472.5,636.72 L474.0,636.72 L475.5,636.72 L477.0,636.72 L478.5,636.72 L480.0,636.72 L481.5,636.72 L483.0,636.72 L484.5,636.72 L486.0,636.72 L487.5,636.71 L489.0,636.71 L490.5,636.71 L492.0,636.71 L493.5,636.71 L495.0,636.71 L496.5,636.71 L498.0,636.71 L499.5,636.71 L501.0,636.71 L502.5,636.71 L504.0,636.71 L505.5,636.70 L507.0,636.70 L508.5,636.70 L510.0,636.70 L511.5,636.70 L513.0,636.70 L514.5,636.70 L516.0,636.70 L517.5,636.70 L519.0,636.70 L520.5,636.70 L522.0,636.70 L523.5,636.70 L525.0,636.69 L526.5,636.69 L528.0,636.69 L529.5,636.69 L531.0,636.69 L532.5,636.69 L534.0,636.69 L535.5,636.69 L537.0,636.69 L538.5,636.69 L540.0,636.69 L541.5,636.69 L543.0,636.69 L544.5,636.68 L546.0,636.68 L547.5,636.68 L549.0,636.68 L550.5,636.68 L552.0,636.68 L553.5,636.68 L555.0,636.68 L556.5,636.68 L558.0,636.68 L559.5,636.68 L561.0,636.68 L562.5,636.68 L564.0,636.67 L565.5,636.67 L567.0,636.67 L568.5,636.67 L570.0,636.67 L571.5,636.67 L573.0,636.67 L574.5,636.67 L576.0,636.67 L577.5,636.67 L579.0,636.67 L580.5,636.67 L582.0,636.67 L583.5,636.66 L585.0,636.66 L586.5,636.66 L588.0,636.66 L589.5,636.66 L591.0,636.66 L592.5,636.66 L594.0,636.66 L595.5,636.66 L597.0,636.66 L598.5,636.66 L600.0,636.66 L601.5,636.65 L603.0,636.65 L604.5,636.65 L606.0,636.65 L607.5,636.65 L609.0,636.65 L610.5,636.65 L612.0,636.65 L613.5,636.65 L615.0,636.65 L616.5,636.65 L618.0,636.65 L619.5,636.65 L621.0,636.64 L622.5,636.64 L624.0,636.64 L625.5,636.64 L627.0,636.64 L628.5,636.64 L630.0,636.64 L631.5,636.64 L633.0,636.64 L634.5,636.64 L636.0,636.64 L637.5,636.64 L639.0,636.63 L640.5,636.63 L642.0,636.63 L643.5,636.63 L645.0,636.63 L646.5,636.63 L648.0,636.63 L649.5,636.63 L651.0,636.63 L652.5,636.63 L654.0,636.63 L655.5,636.63 L657.0,636.62 L658.5,636.62 L660.0,636.62 L661.5,636.62 L663.0,636.62 L664.5,636.62 L666.0,636.62 L667.5,636.62 L669.0,636.62 L670.5,636.62 L672.0,636.62 L673.5,636.62 L675.0,636.61 L676.5,636.61 L678.0,636.61 L679.5,636.61 L681.0,636.61 L682.5,636.61 L684.0,636.61 L685.5,636.61 L687.0,636.61 L688.5,636.61 L690.0,636.61 L691.5,636.60 L693.0,636.60 L694.5,636.60 L696.0,636.60 L697.5,636.60 L699.0,636.60 L700.5,636.60 L702.0,636.60 L703.5,636.60 L705.0,636.60 L706.5,636.60 L708.0,636.60 L709.5,636.59 L711.0,636.59 L712.5,636.59 L714.0,636.59 L715.5,636.59 L717.0,636.59 L718.5,636.59 L720.0,636.59 L721.5,636.59 L723.0,636.59 L724.5,636.59 L726.0,636.59 L727.5,636.59 L729.0,636.59 L730.5,636.59 L732.0,636.58 L733.5,636.58 L735.0,636.58 L736.5,636.58 L738.0,636.58 L739.5,636.58 L741.0,636.58 L742.5,636.58 L744.0,636.58 L745.5,636.58 L747.0,636.58 L748.5,636.58 L750.0,636.58 L751.5,636.58 L753.0,636.58 L754.5,636.58 L756.0,636.58 L757.5,636.57 L759.0,636.57 L760.5,636.57 L762.0,636.57 L763.5,636.57 L765.0,636.57 L766.5,636.57 L768.0,636.57 L769.5,636.57 L771.0,636.57 L772.5,636.57 L774.0,636.57 L775.5,636.57 L777.0,636.57 L778.5,636.57 L780.0,636.57 L781.5,636.56 L783.0,636.56 L784.5,636.56 L786.0,636.56 L787.5,636.56 L789.0,636.56 L790.5,636.56 L792.0,636.56 L793.5,636.56 L795.0,636.56 L796.5,636.56 L798.0,636.56 L799.5,636.56 L801.0,636.55 L802.5,636.55 L804.0,636.55 L805.5,636.55 L807.0,636.55 L808.5,636.55 L810.0,636.55 L811.5,636.55 L813.0,636.55 L814.5,636.55 L816.0,636.54 L817.5,636.54 L819.0,636.54 L820.5,636.54 L822.0,636.54 L823.5,636.54 L825.0,636.54 L826.5,636.54 L828.0,636.54 L829.5,636.53 L831.0,636.53 L832.5,636.53 L834.0,636.53 L835.5,636.53 L837.0,636.53 L838.5,636.53 L840.0,636.52 L841.5,636.52 L843.0,636.52 L844.5,636.52 L846.0,636.52 L847.5,636.52 L849.0,636.51 L850.5,636.51 L852.0,636.51 L853.5,636.51 L855.0,636.51 L856.5,636.50 L858.0,636.50 L859.5,636.50 L861.0,636.50 L862.5,636.49 L864.0,636.49 L865.5,636.48 L867.0,636.47 L868.5,636.46 L870.0,636.45 L871.5,636.43 L873.0,636.42 L874.5,636.40 L876.0,636.38 L877.5,636.36 L879.0,636.34 L880.5,636.32 L882.0,636.29 L883.5,636.27 L885.0,636.24 L886.5,636.21 L888.0,636.18 L889.5,636.15 L891.0,636.12 L892.5,636.09 L894.0,636.05 L895.5,636.02 L897.0,635.98 L898.5,635.94 L900.0,635.90 L901.5,635.86 L903.0,635.82 L904.5,635.78 L906.0,635.73 L907.5,635.69 L909.0,635.64 L910.5,635.60 L912.0,635.55 L913.5,635.50 L915.0,635.45 L916.5,635.40 L918.0,635.35 L919.5,635.29 L921.0,635.24 L922.5,635.19 L924.0,635.13 L925.5,635.08 L927.0,635.02 L928.5,634.96 L930.0,634.90 L931.5,634.85 L933.0,634.79 L934.5,634.72 L936.0,634.66 L937.5,634.60 L939.0,634.54 L940.5,634.47 L942.0,634.39 L943.5,634.31 L945.0,634.23 L946.5,634.14 L948.0,634.04 L949.5,633.93 L951.0,633.81 L952.5,633.69 L954.0,633.57 L955.5,633.44 L957.0,633.30 L958.5,633.16 L960.0,633.01 L961.5,632.86 L963.0,632.70 L964.5,632.54 L966.0,632.38 L967.5,632.21 L969.0,632.04 L970.5,631.87 L972.0,631.69 L973.5,631.51 L975.0,631.33 L976.5,631.15 L978.0,630.97 L979.5,630.79 L981.0,630.60 L982.5,630.42 L984.0,630.23 L985.5,630.05 L987.0,629.87 L988.5,629.68 L990.0,629.50 L991.5,629.31 L993.0,629.12 L994.5,628.93 L996.0,628.74 L997.5,628.54 L999.0,628.34 L1000.5,628.14 L1002.0,627.93 L1003.5,627.73 L1005.0,627.51 L1006.5,627.30 L1008.0,627.08 L1009.5,626.86 L1011.0,626.64 L1012.5,626.42 L1014.0,626.19 L1015.5,625.96 L1017.0,625.73 L1018.5,625.49 L1020.0,625.26 L1021.5,625.02 L1023.0,624.78 L1024.5,624.54 L1026.0,624.29 L1027.5,624.05 L1029.0,623.80 L1030.5,623.55 L1032.0,623.30 L1033.5,623.05 L1035.0,622.79 L1036.5,622.54 L1038.0,622.28 L1039.5,622.03 L1041.0,621.77 L1042.5,621.51 L1044.0,621.25 L1045.5,620.99 L1047.0,620.73 L1048.5,620.47 L1050.0,620.20 L1051.5,619.94 L1053.0,619.68 L1054.5,619.41 L1056.0,619.15 L1057.5,618.88 L1059.0,618.62 L1060.5,618.35 L1062.0,618.09 L1063.5,617.82 L1065.0,617.55 L1066.5,617.27 L1068.0,617.00 L1069.5,616.72 L1071.0,616.44 L1072.5,616.16 L1074.0,615.87 L1075.5,615.58 L1077.0,615.29 L1078.5,615.00 L1080.0,614.71 L1081.5,614.41 L1083.0,614.11 L1084.5,613.81 L1086.0,613.51 L1087.5,613.21 L1089.0,612.91 L1090.5,612.61 L1092.0,612.30 L1093.5,612.00 L1095.0,611.69 L1096.5,611.38 L1098.0,611.07 L1099.5,610.76 L1101.0,610.45 L1102.5,610.13 L1104.0,609.82 L1105.5,609.50 L1107.0,609.18 L1108.5,608.86 L1110.0,608.54 L1111.5,608.22 L1113.0,607.89 L1114.5,607.57 L1116.0,607.25 L1117.5,606.92 L1119.0,606.59 L1120.5,606.27 L1122.0,605.94 L1123.5,605.61 L1125.0,605.28 L1126.5,604.95 L1128.0,604.62 L1129.5,604.30 L1131.0,603.97 L1132.5,603.64 L1134.0,603.31 L1135.5,602.98 L1137.0,602.65 L1138.5,602.33 L1140.0,602.00 L1141.5,601.67 L1143.0,601.35 L1144.5,601.02 L1146.0,600.69 L1147.5,600.36 L1149.0,600.03 L1150.5,599.70 L1152.0,599.37 L1153.5,599.04 L1155.0,598.71 L1156.5,598.38 L1158.0,598.05 L1159.5,597.72 L1161.0,597.39 L1162.5,597.05 L1164.0,596.72 L1165.5,596.39 L1167.0,596.06 L1168.5,595.73 L1170.0,595.40 L1171.5,595.07 L1173.0,594.73 L1174.5,594.40 L1176.0,594.07 L1177.5,593.74 L1179.0,593.41 L1180.5,593.08 L1182.0,592.75 L1183.5,592.42 L1185.0,592.09 L1186.5,591.77 L1188.0,591.44 L1189.5,591.11 L1191.0,590.78 L1192.5,590.46 L1194.0,590.13 L1195.5,589.81 L1197.0,589.48 L1198.5,589.15 L1200.0,588.83 L1201.5,588.51 L1203.0,588.18 L1204.5,587.86 L1206.0,587.53 L1207.5,587.21 L1209.0,586.89 L1210.5,586.56 L1212.0,586.24 L1213.5,585.92 L1215.0,585.59 L1216.5,585.27 L1218.0,584.95 L1219.5,584.63 L1221.0,584.30 L1222.5,583.98 L1224.0,583.66 L1225.5,583.34 L1227.0,583.01 L1228.5,582.69 L1230.0,582.37 L1231.5,582.05 L1233.0,581.73 L1234.5,581.40 L1236.0,581.08 L1237.5,580.76 L1239.0,580.44 L1240.5,580.12 L1242.0,579.82 L1243.5,579.54 L1245.0,579.30 L1246.5,579.10 L1248.0,578.50" fill="none" stroke="#F0F030" stroke-width="2" stroke-linejoin="round" stroke-linecap="round"/><line x1="329.0" y1="558.5" x2="1062.0" y2="558.5" stroke="#D02020" stroke-width="1" /><line x1="1062.5" y1="542.0" x2="1062.5" y2="690.5" stroke="#D02020" stroke-width="1" /><path d="M321.0,719.00 L322.5,719.05 L324.0,719.06 L325.5,719.08 L327.0,719.10 L328.5,719.12 L330.0,719.14 L331.5,719.17 L333.0,719.19 L334.5,719.22 L336.0,719.24 L337.5,719.26 L339.0,719.29 L340.5,719.31 L342.0,719.33 L343.5,719.35 L345.0,719.38 L346.5,719.40 L348.0,719.42 L349.5,719.45 L351.0,719.47 L352.5,719.49 L354.0,719.52 L355.5,719.54 L357.0,719.56 L358.5,719.58 L360.0,719.61 L361.5,719.63 L363.0,719.65 L364.5,719.68 L366.0,719.70 L367.5,719.73 L369.0,719.75 L370.5,719.77 L372.0,719.80 L373.5,719.82 L375.0,719.85 L376.5,719.87 L378.0,719.90 L379.5,719.92 L381.0,719.95 L382.5,719.98 L384.0,720.00 L385.5,720.03 L387.0,720.06 L388.5,720.08 L390.0,720.11 L391.5,720.14 L393.0,720.17 L394.5,720.19 L396.0,720.22 L397.5,720.25 L399.0,720.28 L400.5,720.31 L402.0,720.34 L403.5,720.37 L405.0,720.40 L406.5,720.43 L408.0,720.46 L409.5,720.49 L411.0,720.52 L412.5,720.55 L414.0,720.58 L415.5,720.61 L417.0,720.64 L418.5,720.67 L420.0,720.70 L421.5,720.73 L423.0,720.76 L424.5,720.80 L426.0,720.83 L427.5,720.86 L429.0,720.89 L430.5,720.93 L432.0,720.96 L433.5,720.99 L435.0,721.03 L436.5,721.06 L438.0,721.10 L439.5,721.13 L441.0,721.17 L442.5,721.21 L444.0,721.24 L445.5,721.28 L447.0,721.32 L448.5,721.36 L450.0,721.40 L451.5,721.44 L453.0,721.48 L454.5,721.52 L456.0,721.57 L457.5,721.61 L459.0,721.65 L460.5,721.70 L462.0,721.75 L463.5,721.79 L465.0,721.84 L466.5,721.89 L468.0,721.94 L469.5,721.99 L471.0,722.04 L472.5,722.10 L474.0,722.15 L475.5,722.21 L477.0,722.27 L478.5,722.33 L480.0,722.39 L481.5,722.45 L483.0,722.52 L484.5,722.59 L486.0,722.66 L487.5,722.74 L489.0,722.81 L490.5,722.89 L492.0,722.97 L493.5,723.06 L495.0,723.14 L496.5,723.23 L498.0,723.32 L499.5,723.41 L501.0,723.51 L502.5,723.60 L504.0,723.70 L505.5,723.80 L507.0,723.91 L508.5,724.01 L510.0,724.12 L511.5,724.23 L513.0,724.34 L514.5,724.45 L516.0,724.56 L517.5,724.68 L519.0,724.80 L520.5,724.92 L522.0,725.04 L523.5,725.16 L525.0,725.29 L526.5,725.42 L528.0,725.55 L529.5,725.68 L531.0,725.81 L532.5,725.96 L534.0,726.10 L535.5,726.25 L537.0,726.40 L538.5,726.56 L540.0,726.73 L541.5,726.90 L543.0,727.07 L544.5,727.24 L546.0,727.43 L547.5,727.61 L549.0,727.80 L550.5,728.00 L552.0,728.20 L553.5,728.40 L555.0,728.61 L556.5,728.82 L558.0,729.03 L559.5,729.25 L561.0,729.47 L562.5,729.70 L564.0,729.93 L565.5,730.16 L567.0,730.40 L568.5,730.64 L570.0,730.89 L571.5,731.14 L573.0,731.40 L574.5,731.66 L576.0,731.93 L577.5,732.21 L579.0,732.51 L580.5,732.81 L582.0,733.13 L583.5,733.45 L585.0,733.78 L586.5,734.13 L588.0,734.48 L589.5,734.84 L591.0,735.21 L592.5,735.58 L594.0,735.97 L595.5,736.35 L597.0,736.75 L598.5,737.14 L600.0,737.54 L601.5,737.95 L603.0,738.36 L604.5,738.77 L606.0,739.18 L607.5,739.59 L609.0,740.01 L610.5,740.42 L612.0,740.84 L613.5,741.25 L615.0,741.66 L616.5,742.07 L618.0,742.48 L619.5,742.88 L621.0,743.29 L622.5,743.68 L624.0,744.07 L625.5,744.46 L627.0,744.84 L628.5,745.22 L630.0,745.59 L631.5,745.96 L633.0,746.32 L634.5,746.68 L636.0,747.04 L637.5,747.40 L639.0,747.76 L640.5,748.12 L642.0,748.48 L643.5,748.84 L645.0,749.20 L646.5,749.56 L648.0,749.92 L649.5,750.28 L651.0,750.64 L652.5,751.01 L654.0,751.37 L655.5,751.74 L657.0,752.10 L658.5,752.47 L660.0,752.83 L661.5,753.20 L663.0,753.56 L664.5,753.93 L666.0,754.29 L667.5,754.66 L669.0,755.02 L670.5,755.38 L672.0,755.75 L673.5,756.11 L675.0,756.47 L676.5,756.83 L678.0,757.19 L679.5,757.55 L681.0,757.91 L682.5,758.26 L684.0,758.62 L685.5,758.97 L687.0,759.32 L688.5,759.67 L690.0,760.02 L691.5,760.37 L693.0,760.71 L694.5,761.06 L696.0,761.40 L697.5,761.74 L699.0,762.07 L700.5,762.41 L702.0,762.74 L703.5,763.07 L705.0,763.39 L706.5,763.72 L708.0,764.04 L709.5,764.35 L711.0,764.67 L712.5,764.98 L714.0,765.29 L715.5,765.60 L717.0,765.91 L718.5,766.22 L720.0,766.53 L721.5,766.84 L723.0,767.15 L724.5,767.45 L726.0,767.76 L727.5,768.06 L729.0,768.35 L730.5,768.64 L732.0,768.92 L733.5,769.19 L735.0,769.45 L736.5,769.70 L738.0,769.94 L739.5,770.16 L741.0,770.38 L742.5,770.58 L744.0,770.78 L745.5,770.97 L747.0,771.16 L748.5,771.35 L750.0,771.53 L751.5,771.71 L753.0,771.89 L754.5,772.07 L756.0,772.24 L757.5,772.41 L759.0,772.58 L760.5,772.74 L762.0,772.90 L763.5,773.05 L765.0,773.20 L766.5,773.34 L768.0,773.48 L769.5,773.61 L771.0,773.73 L772.5,773.85 L774.0,773.96 L775.5,774.05 L777.0,774.15 L778.5,774.23 L780.0,774.30 L781.5,774.37 L783.0,774.42 L784.5,774.47 L786.0,774.52 L787.5,774.56 L789.0,774.59 L790.5,774.63 L792.0,774.66 L793.5,774.69 L795.0,774.72 L796.5,774.76 L798.0,774.79 L799.5,774.82 L801.0,774.85 L802.5,774.88 L804.0,774.90 L805.5,774.93 L807.0,774.96 L808.5,774.99 L810.0,775.01 L811.5,775.04 L813.0,775.06 L814.5,775.09 L816.0,775.11 L817.5,775.13 L819.0,775.16 L820.5,775.18 L822.0,775.20 L823.5,775.22 L825.0,775.24 L826.5,775.26 L828.0,775.27 L829.5,775.29 L831.0,775.31 L832.5,775.32 L834.0,775.34 L835.5,775.35 L837.0,775.37 L838.5,775.38 L840.0,775.39 L841.5,775.41 L843.0,775.42 L844.5,775.43 L846.0,775.44 L847.5,775.45 L849.0,775.46 L850.5,775.46 L852.0,775.47 L853.5,775.48 L855.0,775.48 L856.5,775.49 L858.0,775.49 L859.5,775.49 L861.0,775.50 L862.5,775.50 L864.0,775.50 L865.5,775.50 L867.0,775.49 L868.5,775.49 L870.0,775.49 L871.5,775.48 L873.0,775.47 L874.5,775.46 L876.0,775.45 L877.5,775.43 L879.0,775.42 L880.5,775.40 L882.0,775.38 L883.5,775.36 L885.0,775.34 L886.5,775.32 L888.0,775.29 L889.5,775.27 L891.0,775.24 L892.5,775.21 L894.0,775.18 L895.5,775.15 L897.0,775.12 L898.5,775.09 L900.0,775.06 L901.5,775.02 L903.0,774.99 L904.5,774.95 L906.0,774.91 L907.5,774.88 L909.0,774.84 L910.5,774.80 L912.0,774.76 L913.5,774.72 L915.0,774.68 L916.5,774.64 L918.0,774.60 L919.5,774.56 L921.0,774.52 L922.5,774.48 L924.0,774.44 L925.5,774.40 L927.0,774.36 L928.5,774.31 L930.0,774.27 L931.5,774.23 L933.0,774.19 L934.5,774.15 L936.0,774.11 L937.5,774.07 L939.0,774.02 L940.5,773.98 L942.0,773.94 L943.5,773.89 L945.0,773.84 L946.5,773.78 L948.0,773.73 L949.5,773.67 L951.0,773.61 L952.5,773.54 L954.0,773.47 L955.5,773.40 L957.0,773.33 L958.5,773.26 L960.0,773.18 L961.5,773.11 L963.0,773.03 L964.5,772.95 L966.0,772.87 L967.5,772.79 L969.0,772.71 L970.5,772.63 L972.0,772.55 L973.5,772.47 L975.0,772.39 L976.5,772.30 L978.0,772.23 L979.5,772.15 L981.0,772.07 L982.5,771.99 L984.0,771.92 L985.5,771.84 L987.0,771.77 L988.5,771.70 L990.0,771.63 L991.5,771.57 L993.0,771.51 L994.5,771.45 L996.0,771.39 L997.5,771.34 L999.0,771.29 L1000.5,771.24 L1002.0,771.20 L1003.5,771.16 L1005.0,771.12 L1006.5,771.09 L1008.0,771.07 L1009.5,771.05 L1011.0,771.03 L1012.5,771.02 L1014.0,771.01 L1015.5,771.01 L1017.0,771.01 L1018.5,771.01 L1020.0,771.02 L1021.5,771.02 L1023.0,771.03 L1024.5,771.05 L1026.0,771.06 L1027.5,771.08 L1029.0,771.10 L1030.5,771.12 L1032.0,771.14 L1033.5,771.16 L1035.0,771.19 L1036.5,771.22 L1038.0,771.25 L1039.5,771.28 L1041.0,771.31 L1042.5,771.35 L1044.0,771.39 L1045.5,771.43 L1047.0,771.47 L1048.5,771.51 L1050.0,771.56 L1051.5,771.60 L1053.0,771.65 L1054.5,771.70 L1056.0,771.76 L1057.5,771.81 L1059.0,771.87 L1060.5,771.94 L1062.0,772.02 L1063.5,772.12 L1065.0,772.24 L1066.5,772.39 L1068.0,772.58 L1069.5,772.79 L1071.0,773.04 L1072.5,773.32 L1074.0,773.63 L1075.5,773.95 L1077.0,774.30 L1078.5,774.67 L1080.0,775.05 L1081.5,775.44 L1083.0,775.84 L1084.5,776.25 L1086.0,776.67 L1087.5,777.08 L1089.0,777.50 L1090.5,777.91 L1092.0,778.32 L1093.5,778.72 L1095.0,779.13 L1096.5,779.54 L1098.0,779.95 L1099.5,780.37 L1101.0,780.80 L1102.5,781.24 L1104.0,781.69 L1105.5,782.15 L1107.0,782.61 L1108.5,783.09 L1110.0,783.58 L1111.5,784.08 L1113.0,784.60 L1114.5,785.12 L1116.0,785.66 L1117.5,786.21 L1119.0,786.77 L1120.5,787.35 L1122.0,787.94 L1123.5,788.56 L1125.0,789.19 L1126.5,789.85 L1128.0,790.53 L1129.5,791.23 L1131.0,791.95 L1132.5,792.70 L1134.0,793.46 L1135.5,794.24 L1137.0,795.03 L1138.5,795.84 L1140.0,796.66 L1141.5,797.49 L1143.0,798.34 L1144.5,799.18 L1146.0,800.04 L1147.5,800.90 L1149.0,801.76 L1150.5,802.62 L1152.0,803.49 L1153.5,804.35 L1155.0,805.21 L1156.5,806.08 L1158.0,806.95 L1159.5,807.82 L1161.0,808.70 L1162.5,809.61 L1164.0,810.53 L1165.5,811.47 L1167.0,812.45 L1168.5,813.46 L1170.0,814.51 L1171.5,815.61 L1173.0,816.76 L1174.5,817.96 L1176.0,819.21 L1177.5,820.52 L1179.0,821.88 L1180.5,823.29 L1182.0,824.74 L1183.5,826.23 L1185.0,827.75 L1186.5,829.31 L1188.0,830.89 L1189.5,832.49 L1191.0,834.12 L1192.5,835.75 L1194.0,837.40 L1195.5,839.05 L1197.0,840.72 L1198.5,842.40 L1200.0,844.10 L1201.5,845.82 L1203.0,847.57 L1204.5,849.35 L1206.0,851.16 L1207.5,853.01 L1209.0,854.89 L1210.5,856.82 L1212.0,858.78 L1213.5,860.80 L1215.0,862.87 L1216.5,865.00 L1218.0,867.17 L1219.5,869.39 L1221.0,871.64 L1222.5,873.90 L1224.0,876.18 L1225.5,878.46 L1227.0,880.73 L1228.5,882.99 L1230.0,885.24 L1231.5,887.48 L1233.0,889.71 L1234.5,891.94 L1236.0,894.17 L1237.5,896.40 L1239.0,898.63 L1240.5,900.81 L1242.0,902.91 L1243.5,904.83 L1245.0,906.50 L1246.5,907.85 L1248.0,912.00" fill="none" stroke="#2EE82E" stroke-width="2" stroke-linejoin="round" stroke-linecap="round"/><path d="M321.0,912.40 L322.5,912.40 L324.0,912.40 L325.5,912.39 L327.0,912.39 L328.5,912.39 L330.0,912.39 L331.5,912.39 L333.0,912.39 L334.5,912.38 L336.0,912.38 L337.5,912.38 L339.0,912.38 L340.5,912.38 L342.0,912.38 L343.5,912.37 L345.0,912.37 L346.5,912.37 L348.0,912.37 L349.5,912.37 L351.0,912.37 L352.5,912.36 L354.0,912.36 L355.5,912.36 L357.0,912.36 L358.5,912.36 L360.0,912.36 L361.5,912.35 L363.0,912.35 L364.5,912.35 L366.0,912.35 L367.5,912.35 L369.0,912.35 L370.5,912.35 L372.0,912.34 L373.5,912.34 L375.0,912.34 L376.5,912.34 L378.0,912.34 L379.5,912.34 L381.0,912.34 L382.5,912.33 L384.0,912.33 L385.5,912.33 L387.0,912.33 L388.5,912.33 L390.0,912.33 L391.5,912.33 L393.0,912.33 L394.5,912.32 L396.0,912.32 L397.5,912.32 L399.0,912.32 L400.5,912.32 L402.0,912.32 L403.5,912.32 L405.0,912.31 L406.5,912.31 L408.0,912.31 L409.5,912.31 L411.0,912.31 L412.5,912.31 L414.0,912.31 L415.5,912.31 L417.0,912.30 L418.5,912.30 L420.0,912.30 L421.5,912.30 L423.0,912.30 L424.5,912.30 L426.0,912.30 L427.5,912.30 L429.0,912.29 L430.5,912.29 L432.0,912.29 L433.5,912.29 L435.0,912.29 L436.5,912.29 L438.0,912.29 L439.5,912.29 L441.0,912.28 L442.5,912.28 L444.0,912.28 L445.5,912.28 L447.0,912.28 L448.5,912.28 L450.0,912.28 L451.5,912.28 L453.0,912.27 L454.5,912.27 L456.0,912.27 L457.5,912.27 L459.0,912.27 L460.5,912.27 L462.0,912.27 L463.5,912.26 L465.0,912.26 L466.5,912.26 L468.0,912.26 L469.5,912.26 L471.0,912.26 L472.5,912.26 L474.0,912.25 L475.5,912.25 L477.0,912.25 L478.5,912.25 L480.0,912.25 L481.5,912.25 L483.0,912.25 L484.5,912.25 L486.0,912.24 L487.5,912.24 L489.0,912.24 L490.5,912.24 L492.0,912.24 L493.5,912.24 L495.0,912.23 L496.5,912.23 L498.0,912.23 L499.5,912.23 L501.0,912.23 L502.5,912.23 L504.0,912.23 L505.5,912.22 L507.0,912.22 L508.5,912.22 L510.0,912.22 L511.5,912.22 L513.0,912.22 L514.5,912.21 L516.0,912.21 L517.5,912.21 L519.0,912.21 L520.5,912.21 L522.0,912.21 L523.5,912.20 L525.0,912.20 L526.5,912.20 L528.0,912.20 L529.5,912.20 L531.0,912.19 L532.5,912.19 L534.0,912.19 L535.5,912.19 L537.0,912.19 L538.5,912.19 L540.0,912.18 L541.5,912.18 L543.0,912.18 L544.5,912.18 L546.0,912.18 L547.5,912.17 L549.0,912.17 L550.5,912.17 L552.0,912.17 L553.5,912.16 L555.0,912.16 L556.5,912.16 L558.0,912.16 L559.5,912.16 L561.0,912.15 L562.5,912.15 L564.0,912.15 L565.5,912.15 L567.0,912.14 L568.5,912.14 L570.0,912.14 L571.5,912.14 L573.0,912.14 L574.5,912.13 L576.0,912.13 L577.5,912.13 L579.0,912.13 L580.5,912.12 L582.0,912.12 L583.5,912.12 L585.0,912.12 L586.5,912.11 L588.0,912.11 L589.5,912.11 L591.0,912.10 L592.5,912.10 L594.0,912.10 L595.5,912.10 L597.0,912.09 L598.5,912.09 L600.0,912.09 L601.5,912.08 L603.0,912.08 L604.5,912.08 L606.0,912.08 L607.5,912.07 L609.0,912.07 L610.5,912.07 L612.0,912.06 L613.5,912.06 L615.0,912.06 L616.5,912.05 L618.0,912.05 L619.5,912.05 L621.0,912.04 L622.5,912.04 L624.0,912.04 L625.5,912.03 L627.0,912.03 L628.5,912.03 L630.0,912.02 L631.5,912.02 L633.0,912.02 L634.5,912.01 L636.0,912.01 L637.5,912.01 L639.0,912.00 L640.5,912.00 L642.0,911.99 L643.5,911.99 L645.0,911.99 L646.5,911.98 L648.0,911.98 L649.5,911.97 L651.0,911.97 L652.5,911.96 L654.0,911.95 L655.5,911.95 L657.0,911.94 L658.5,911.93 L660.0,911.93 L661.5,911.92 L663.0,911.91 L664.5,911.90 L666.0,911.90 L667.5,911.89 L669.0,911.88 L670.5,911.87 L672.0,911.86 L673.5,911.85 L675.0,911.84 L676.5,911.83 L678.0,911.82 L679.5,911.81 L681.0,911.80 L682.5,911.79 L684.0,911.78 L685.5,911.77 L687.0,911.76 L688.5,911.75 L690.0,911.74 L691.5,911.72 L693.0,911.71 L694.5,911.70 L696.0,911.68 L697.5,911.67 L699.0,911.66 L700.5,911.64 L702.0,911.63 L703.5,911.62 L705.0,911.60 L706.5,911.59 L708.0,911.57 L709.5,911.56 L711.0,911.54 L712.5,911.53 L714.0,911.51 L715.5,911.50 L717.0,911.48 L718.5,911.46 L720.0,911.45 L721.5,911.43 L723.0,911.41 L724.5,911.39 L726.0,911.38 L727.5,911.36 L729.0,911.34 L730.5,911.32 L732.0,911.30 L733.5,911.28 L735.0,911.27 L736.5,911.25 L738.0,911.23 L739.5,911.21 L741.0,911.19 L742.5,911.17 L744.0,911.15 L745.5,911.13 L747.0,911.10 L748.5,911.08 L750.0,911.06 L751.5,911.04 L753.0,911.02 L754.5,911.00 L756.0,910.97 L757.5,910.95 L759.0,910.93 L760.5,910.91 L762.0,910.88 L763.5,910.86 L765.0,910.84 L766.5,910.81 L768.0,910.79 L769.5,910.76 L771.0,910.74 L772.5,910.71 L774.0,910.69 L775.5,910.66 L777.0,910.64 L778.5,910.61 L780.0,910.59 L781.5,910.56 L783.0,910.53 L784.5,910.51 L786.0,910.48 L787.5,910.45 L789.0,910.42 L790.5,910.39 L792.0,910.36 L793.5,910.32 L795.0,910.28 L796.5,910.25 L798.0,910.21 L799.5,910.17 L801.0,910.12 L802.5,910.08 L804.0,910.03 L805.5,909.99 L807.0,909.94 L808.5,909.89 L810.0,909.84 L811.5,909.79 L813.0,909.73 L814.5,909.68 L816.0,909.62 L817.5,909.56 L819.0,909.50 L820.5,909.44 L822.0,909.38 L823.5,909.31 L825.0,909.25 L826.5,909.18 L828.0,909.11 L829.5,909.04 L831.0,908.97 L832.5,908.90 L834.0,908.82 L835.5,908.75 L837.0,908.67 L838.5,908.59 L840.0,908.51 L841.5,908.43 L843.0,908.35 L844.5,908.27 L846.0,908.18 L847.5,908.10 L849.0,908.01 L850.5,907.92 L852.0,907.83 L853.5,907.74 L855.0,907.65 L856.5,907.55 L858.0,907.46 L859.5,907.36 L861.0,907.26 L862.5,907.16 L864.0,907.06 L865.5,906.96 L867.0,906.85 L868.5,906.73 L870.0,906.61 L871.5,906.49 L873.0,906.36 L874.5,906.22 L876.0,906.08 L877.5,905.93 L879.0,905.78 L880.5,905.62 L882.0,905.46 L883.5,905.29 L885.0,905.12 L886.5,904.94 L888.0,904.76 L889.5,904.57 L891.0,904.38 L892.5,904.18 L894.0,903.98 L895.5,903.77 L897.0,903.56 L898.5,903.34 L900.0,903.12 L901.5,902.90 L903.0,902.67 L904.5,902.44 L906.0,902.20 L907.5,901.96 L909.0,901.72 L910.5,901.47 L912.0,901.22 L913.5,900.97 L915.0,900.71 L916.5,900.45 L918.0,900.18 L919.5,899.92 L921.0,899.65 L922.5,899.37 L924.0,899.10 L925.5,898.82 L927.0,898.54 L928.5,898.25 L930.0,897.97 L931.5,897.68 L933.0,897.38 L934.5,897.09 L936.0,896.79 L937.5,896.49 L939.0,896.18 L940.5,895.87 L942.0,895.54 L943.5,895.20 L945.0,894.84 L946.5,894.47 L948.0,894.07 L949.5,893.67 L951.0,893.25 L952.5,892.81 L954.0,892.37 L955.5,891.91 L957.0,891.44 L958.5,890.97 L960.0,890.49 L961.5,890.00 L963.0,889.50 L964.5,889.01 L966.0,888.50 L967.5,888.00 L969.0,887.50 L970.5,887.00 L972.0,886.50 L973.5,886.00 L975.0,885.50 L976.5,885.01 L978.0,884.53 L979.5,884.06 L981.0,883.59 L982.5,883.13 L984.0,882.69 L985.5,882.25 L987.0,881.83 L988.5,881.42 L990.0,881.02 L991.5,880.62 L993.0,880.23 L994.5,879.84 L996.0,879.45 L997.5,879.07 L999.0,878.68 L1000.5,878.29 L1002.0,877.90 L1003.5,877.52 L1005.0,877.13 L1006.5,876.75 L1008.0,876.36 L1009.5,875.98 L1011.0,875.60 L1012.5,875.22 L1014.0,874.84 L1015.5,874.47 L1017.0,874.10 L1018.5,873.73 L1020.0,873.36 L1021.5,873.00 L1023.0,872.64 L1024.5,872.28 L1026.0,871.93 L1027.5,871.58 L1029.0,871.23 L1030.5,870.89 L1032.0,870.55 L1033.5,870.22 L1035.0,869.89 L1036.5,869.57 L1038.0,869.26 L1039.5,868.94 L1041.0,868.64 L1042.5,868.34 L1044.0,868.05 L1045.5,867.76 L1047.0,867.48 L1048.5,867.21 L1050.0,866.94 L1051.5,866.68 L1053.0,866.43 L1054.5,866.18 L1056.0,865.95 L1057.5,865.72 L1059.0,865.50 L1060.5,865.29 L1062.0,865.08 L1063.5,864.88 L1065.0,864.69 L1066.5,864.51 L1068.0,864.33 L1069.5,864.15 L1071.0,863.98 L1072.5,863.81 L1074.0,863.65 L1075.5,863.50 L1077.0,863.34 L1078.5,863.19 L1080.0,863.05 L1081.5,862.91 L1083.0,862.77 L1084.5,862.64 L1086.0,862.51 L1087.5,862.38 L1089.0,862.26 L1090.5,862.14 L1092.0,862.02 L1093.5,861.91 L1095.0,861.79 L1096.5,861.67 L1098.0,861.55 L1099.5,861.43 L1101.0,861.32 L1102.5,861.21 L1104.0,861.11 L1105.5,861.02 L1107.0,860.95 L1108.5,860.90 L1110.0,860.85 L1111.5,860.83 L1113.0,860.81 L1114.5,860.80 L1116.0,860.80 L1117.5,860.80 L1119.0,860.80 L1120.5,860.80 L1122.0,860.80 L1123.5,860.80 L1125.0,860.80 L1126.5,860.80 L1128.0,860.80 L1129.5,860.80 L1131.0,860.80 L1132.5,860.80 L1134.0,860.80 L1135.5,860.80 L1137.0,860.80 L1138.5,860.80 L1140.0,860.80 L1141.5,860.80 L1143.0,860.80 L1144.5,860.80 L1146.0,860.80 L1147.5,860.80 L1149.0,860.80 L1150.5,860.80 L1152.0,860.80 L1153.5,860.80 L1155.0,860.80 L1156.5,860.80 L1158.0,860.80 L1159.5,860.80 L1161.0,860.80 L1162.5,860.80 L1164.0,860.80 L1165.5,860.80 L1167.0,860.80 L1168.5,860.80 L1170.0,860.80 L1171.5,860.80 L1173.0,860.80 L1174.5,860.80 L1176.0,860.80 L1177.5,860.80 L1179.0,860.80 L1180.5,860.80 L1182.0,860.80 L1183.5,860.81 L1185.0,860.82 L1186.5,860.83 L1188.0,860.86 L1189.5,860.90 L1191.0,860.95 L1192.5,861.02 L1194.0,861.10 L1195.5,861.18 L1197.0,861.28 L1198.5,861.39 L1200.0,861.51 L1201.5,861.64 L1203.0,861.77 L1204.5,861.91 L1206.0,862.05 L1207.5,862.20 L1209.0,862.36 L1210.5,862.51 L1212.0,862.67 L1213.5,862.84 L1215.0,863.01 L1216.5,863.19 L1218.0,863.38 L1219.5,863.58 L1221.0,863.81 L1222.5,864.05 L1224.0,864.31 L1225.5,864.58 L1227.0,864.87 L1228.5,865.17 L1230.0,865.48 L1231.5,865.80 L1233.0,866.12 L1234.5,866.46 L1236.0,866.79 L1237.5,867.13 L1239.0,867.46 L1240.5,867.79 L1242.0,868.10 L1243.5,868.38 L1245.0,868.63 L1246.5,868.82 L1248.0,869.40" fill="none" stroke="#F0F030" stroke-width="2" stroke-linejoin="round" stroke-linecap="round"/><line x1="327.5" y1="708.0" x2="327.5" y2="923.0" stroke="#3CD03C" stroke-width="1" stroke-dasharray="2,3"/><line x1="1062.5" y1="708.0" x2="1062.5" y2="923.0" stroke="#3CD03C" stroke-width="1" stroke-dasharray="2,3"/><line x1="321.0" y1="719.5" x2="1248.0" y2="719.5" stroke="#3CD03C" stroke-width="1" stroke-dasharray="2,3"/><line x1="321.0" y1="773.5" x2="1248.0" y2="773.5" stroke="#3CD03C" stroke-width="1" stroke-dasharray="2,3"/><path d="M322.5,692.5 H332.5 V702.5 L327.5,707.5 L322.5,702.5 Z" fill="#000" stroke="#3CD03C" stroke-width="1"/><text x="327.5" y="702.0" fill="#3CD03C" text-anchor="middle" font-size="10">1</text><path d="M1057.5,692.5 H1067.5 V702.5 L1062.5,707.5 L1057.5,702.5 Z" fill="#000" stroke="#3CD03C" stroke-width="1"/><text x="1062.5" y="702.0" fill="#3CD03C" text-anchor="middle" font-size="10">2</text><text x="200.0" y="461.0" fill="#30D030" text-anchor="start" font-size="11">A: out</text><text x="200.0" y="477.0" fill="#D8D830" text-anchor="start" font-size="11">in-fb</text><text x="200.0" y="719.0" fill="#30D030" text-anchor="start" font-size="11">A: out</text><text x="200.0" y="735.0" fill="#D8D830" text-anchor="start" font-size="11">in-fb</text></svg></div></div>

<!-- title bar icon + buttons -->
<svg class="a" style="left:2px;top:4px" width="18" height="18">
<rect x="0.5" y="0.5" width="16" height="16" fill="#FADCF5" stroke="#E0A0D8"/>
<path d="M3,4 H10 M4,4 V12 Q5,15 9,14" stroke="#555" stroke-width="1.4" fill="none"/>
<circle cx="12.5" cy="5" r="2.8" fill="#D02020"/><circle cx="12.5" cy="12" r="2.8" fill="#1A2AA0"/><circle cx="5" cy="13.5" r="2" fill="#20A020"/>
</svg>
<div class="a wb" style="left:1211px;top:2px"></div>
<div class="a wb" style="left:1234px;top:2px"></div>
<div class="a" style="left:1257px;top:2px;width:21px;height:21px;border:1px solid #fff;border-radius:3px;background:linear-gradient(135deg,#F08A6A,#E0501E 55%,#C83A10)"></div>
<svg class="a" style="left:1200px;top:0" width="80" height="26">
<rect x="16" y="15" width="7" height="3" fill="#fff"/>
<rect x="41.5" y="6.5" width="7" height="6" fill="none" stroke="#fff" stroke-width="1.3"/>
<rect x="38.5" y="9.5" width="7" height="6" fill="#2A64E8" stroke="#fff" stroke-width="1.6"/>
<path d="M63,7 L73,17 M73,7 L63,17" stroke="#fff" stroke-width="2.2"/>
</svg>
<!-- wave area left margin -->
<div class="a" style="left:177px;top:689px;width:13px;height:1px;background:#2A2A26"></div><div class="a" style="left:177px;top:690px;width:13px;height:1px;background:#9A988C"></div>
<svg class="a" style="left:176px;top:810px" width="14" height="20"><path d="M3.5,2 L12.5,10 L3.5,18 Z" fill="#000"/></svg>
<!-- wave frame bottom/right -->
<div class="a" style="left:176px;top:949px;width:1104px;height:5px;background:linear-gradient(#FFFFFF 0px,#FAFAF8 1.5px,#ECEAE4 3px,#F2F1EC 5px)"></div>
<!-- AC analysis tab -->
<svg class="a" style="left:175px;top:950px" width="1105" height="26">
<path d="M0,5.5 H9.5 L14.5,20.5 H73.5 L77.5,5.5 H1105" fill="none" stroke="#000" stroke-width="1"/>
<path d="M10,5 L15,20 H73 L77,5 Z" fill="#ECE9D8"/>
<line x1="0" y1="4.5" x2="1105" y2="4.5" stroke="#fff"/>
</svg>
<div class="a" style="left:190px;top:956px;font-size:11px;letter-spacing:-0.3px">AC Analysis</div>
<!-- status bar panels -->
<div class="a" style="left:0;top:975px;width:1280px;height:1px;background:#F8F7F2"></div>
<div class="a" style="left:0;top:993px;width:1280px;height:1px;background:#FFFFFF"></div>
<div class="a" style="left:0;top:977px;width:50px;height:16px;border-top:1px solid #ACA899;border-right:1px solid #fff"></div>
<div class="a" style="left:52px;top:977px;width:1228px;height:16px;border-top:1px solid #ACA899;border-left:1px solid #ACA899"></div>

<div class="a" style="left:0;top:994px;width:1280px;height:30px;background:linear-gradient(#3D76DE 0px,#5A9BF0 1px,#2F6BE0 3px,#245EDB 6px,#2460DC 24px,#1F51C4 30px)"></div>
<!-- start -->
<div class="a" style="left:0;top:994px;width:99px;height:30px;border-radius:0 12px 12px 0;background:linear-gradient(#3D8F3D 0px,#6CC06C 2px,#48A848 6px,#3C9C3C 16px,#379337 26px,#2E7F2E 30px);box-shadow:inset -3px 0 4px #2A6A2A"></div>
<svg class="a" style="left:0;top:994px" width="100" height="30">
<path d="M12,7 Q16,5 20,7 L19,14 Q15,12 11,14 Z" fill="#F06A2A"/>
<path d="M21,7 Q25,9 29,7 L28,14 Q24,16 20,14 Z" fill="#7CC63A"/>
<path d="M11,15 Q15,13 19,15 L18,22 Q14,20 10,22 Z" fill="#3A8AE8"/>
<path d="M20,15 Q24,17 28,15 L27,22 Q23,24 19,22 Z" fill="#F8C21A"/>
</svg>
<div class="a" style="left:35px;top:1000px;color:#fff;font-size:17px;font-weight:bold;font-style:italic;text-shadow:1px 1px 1px #1A4A1A">Start</div>
<!-- task buttons -->
<div class="a" style="left:109px;top:998px;width:158px;height:26px;border-radius:3px;background:#1E49B5;box-shadow:inset 1px 1px 2px #10307A"></div>
<svg class="a" style="left:119px;top:1002px" width="16" height="16">
<rect x="0.5" y="0.5" width="15" height="15" fill="#FADCF5" stroke="#E8A8E0"/>
<path d="M3,4 H9 M4,4 V12 Q5,14 8,13" stroke="#555" stroke-width="1.3" fill="none"/>
<circle cx="11.5" cy="4.5" r="2.5" fill="#D02020"/><circle cx="11.5" cy="11" r="2.5" fill="#1A2AA0"/><circle cx="4.5" cy="12.5" r="1.8" fill="#20A020"/>
</svg>
<div class="a" style="left:138px;top:1004px;color:#fff;font-size:11px">CircuitMaker</div>
<div class="a" style="left:270px;top:998px;width:157px;height:26px;border-radius:3px;background:linear-gradient(#4A8CF6,#3A7EF0 60%,#3678EA);box-shadow:inset 1px 1px 0 #6AA8FF"></div>
<svg class="a" style="left:278px;top:1001px" width="16" height="16">
<rect x="0.5" y="0.5" width="14" height="14" fill="#1A1A6A" stroke="#000"/>
<rect x="3" y="1" width="8" height="4" fill="#C8C8D8"/>
<rect x="2" y="7" width="11" height="7" fill="#fff"/>
<rect x="2" y="8.5" width="11" height="1.6" fill="#D02020"/><rect x="2" y="11.5" width="11" height="1.6" fill="#D02020"/>
</svg>
<div class="a" style="left:297px;top:1004px;color:#fff;font-size:11px">Total Commander 6.5...</div>
<!-- tray -->
<div class="a" style="left:1133px;top:994px;width:147px;height:30px;background:linear-gradient(#1C9BEF 0px,#12A0F4 3px,#0E8FEA 20px,#0C7ADD 30px);border-left:1px solid #0F5FCF;box-shadow:inset 1px 0 1px #3FB5FF"></div>
<div class="a" style="left:1098px;top:1004px;color:#fff;font-size:11px">HU</div>
<svg class="a" style="left:1140px;top:1000px" width="95" height="20">
<path d="M4,13 L14,3 L19,5 L10,14 Z" fill="#30A040"/><path d="M6,14 L15,5 L18,6 L9,15 Z" fill="#E8D020"/><path d="M8,15 L16,7 L19,8 L11,16 Z" fill="#D02020"/>
<path d="M3,14 L8,9 M3,14 H18" stroke="#fff" stroke-width="1.6" fill="none"/>
<path d="M24,3 L30,1.5 L36,3 V9 Q36,14 30,17 Q24,14 24,9 Z" fill="#D02828" stroke="#F0A0A0" stroke-width="0.8"/>
<path d="M27.5,6.5 L32.5,11.5 M32.5,6.5 L27.5,11.5" stroke="#fff" stroke-width="1.6"/>
<circle cx="48" cy="8" r="6.5" fill="#8A8A8A"/><circle cx="47" cy="7" r="3.5" fill="#C8C8C8"/><path d="M50,15 L55,11" stroke="#B8D8FF"/>
<path d="M60,7 H63 L68,3 V15 L63,11 H60 Z" fill="#E8762A" stroke="#402010" stroke-width="0.8"/>
<path d="M70,5 Q72,9 70,13 M72,3 Q75,9 72,15" stroke="#222" stroke-width="1.2" fill="none"/>
<path d="M79,2 H87 L90,5 V13 L87,17 H79 L77,13 V5 Z" fill="#1A3AC8" stroke="#0A1A70" stroke-width="0.8"/>
<path d="M81,6 L86,12 L83,15 V3 L86,6 L81,12" stroke="#E02020" stroke-width="1.3" fill="none"/>
</svg>
<div class="a" style="left:1239px;top:1004px;color:#fff;font-size:11px">10:58</div>

</body></html>
